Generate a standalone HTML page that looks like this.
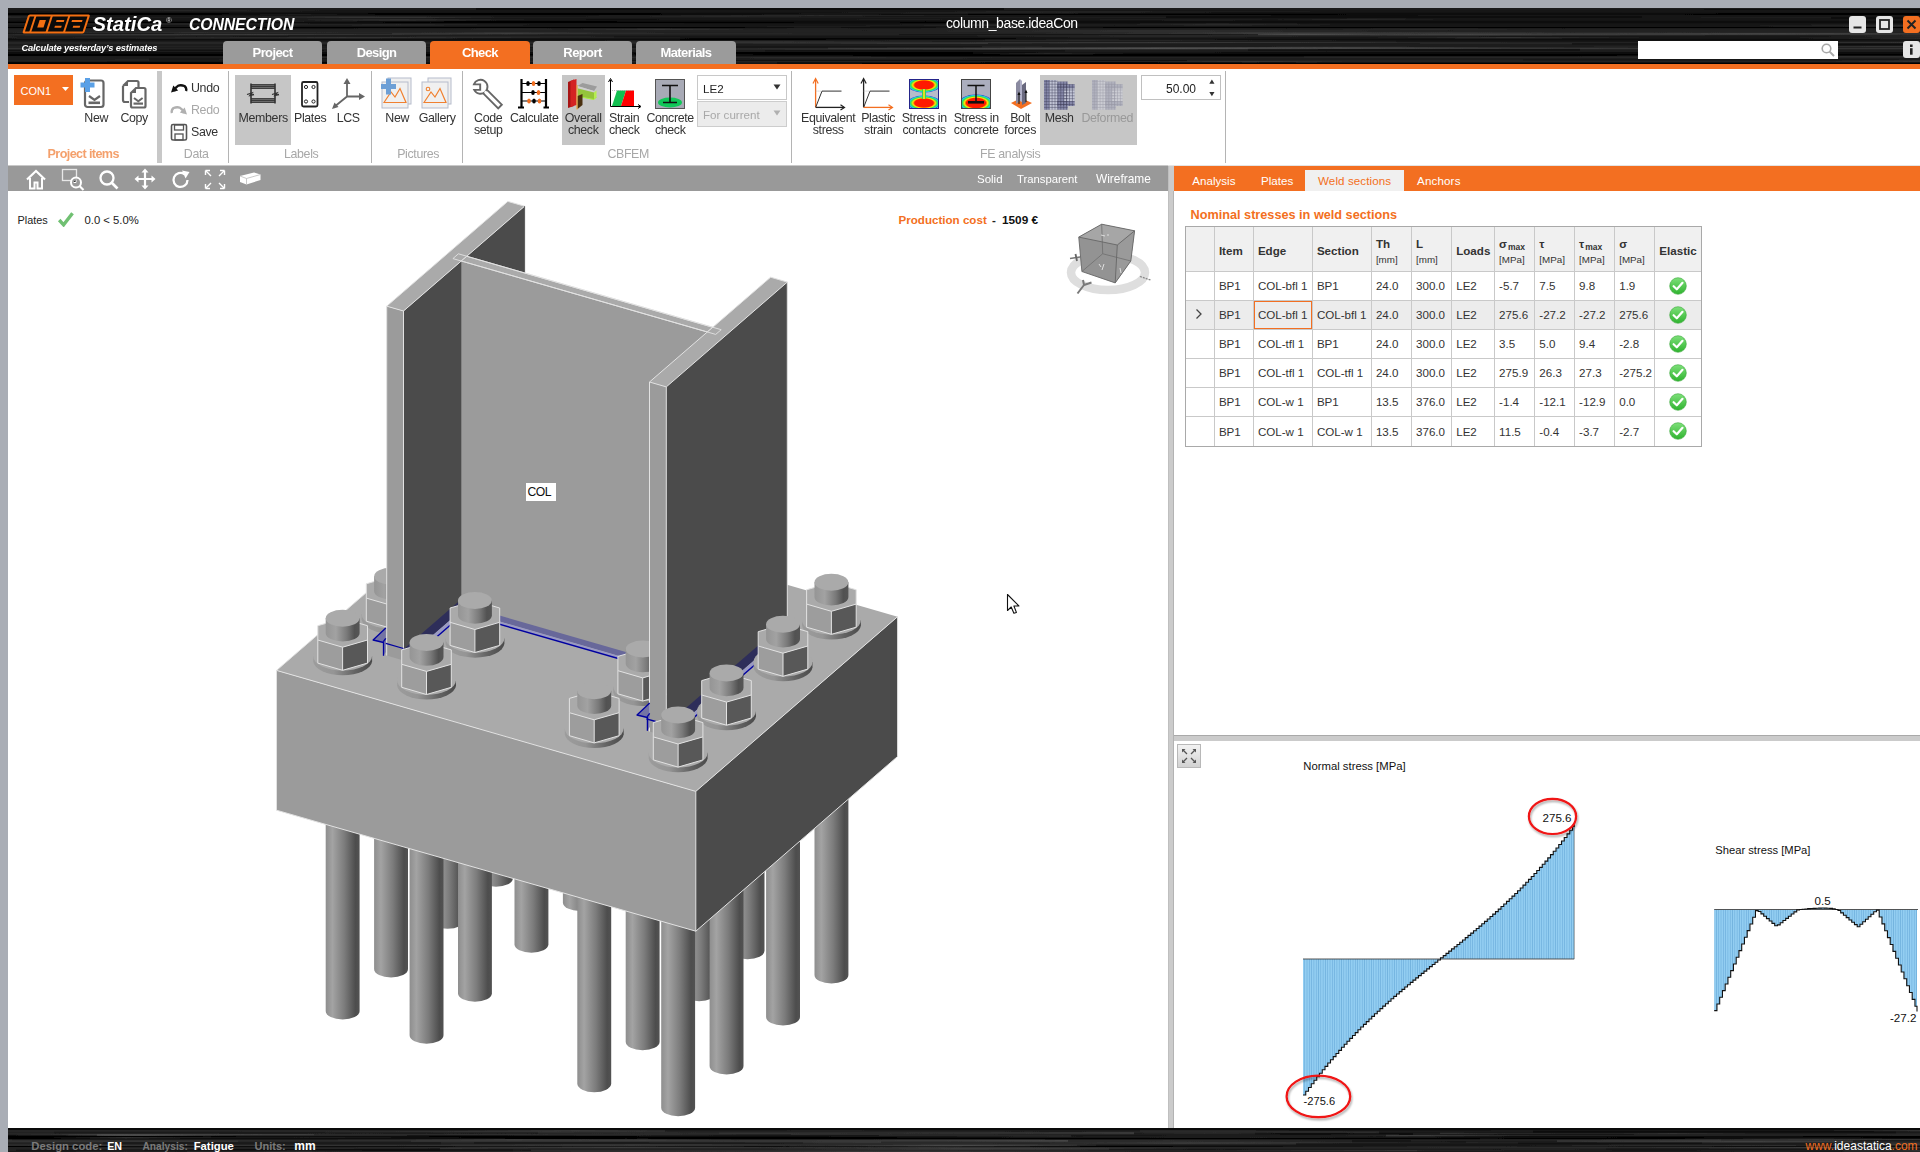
<!DOCTYPE html>
<html><head><meta charset="utf-8">
<style>
*{margin:0;padding:0;box-sizing:border-box}
html,body{width:1920px;height:1152px;overflow:hidden;background:#a9adb5;font-family:"Liberation Sans",sans-serif;color:#222}
.a{position:absolute}
.t{position:absolute;white-space:nowrap}
.brush{background-color:#131313;background-image:repeating-linear-gradient(180deg,rgba(255,255,255,0) 0px,rgba(255,255,255,0.06) 1.5px,rgba(0,0,0,0) 3px,rgba(0,0,0,0.35) 4.5px,rgba(255,255,255,0.03) 6px,rgba(0,0,0,0) 7px)}
</style></head><body>

<svg class="a" style="left:8px;top:8px" width="1912" height="56"><defs><linearGradient id="bl7" x1="0" x2="1"><stop offset="0" stop-color="#fff" stop-opacity="0"/><stop offset="0.5" stop-color="#fff" stop-opacity="1"/><stop offset="1" stop-color="#fff" stop-opacity="0"/></linearGradient><filter id="bf7" x="0" y="-50%" width="100%" height="200%"><feGaussianBlur stdDeviation="0 0.55"/></filter></defs><rect width="1912" height="56" fill="#202020"/><g filter="url(#bf7)"><rect y="0.0" width="1912" height="2.0" fill="rgb(26,26,26)"/><rect y="2.0" width="1912" height="2.5" fill="rgb(25,25,25)"/><rect y="4.5" width="1912" height="2.5" fill="rgb(4,4,4)"/><rect y="7.0" width="1912" height="2.0" fill="rgb(25,25,25)"/><rect y="9.0" width="1912" height="1.0" fill="rgb(27,27,27)"/><rect y="10.0" width="1912" height="2.5" fill="rgb(24,24,24)"/><rect y="12.5" width="1912" height="3.0" fill="rgb(7,7,7)"/><rect y="15.5" width="1912" height="2.5" fill="rgb(24,24,24)"/><rect y="18.0" width="1912" height="1.0" fill="rgb(24,24,24)"/><rect y="19.0" width="1912" height="1.5" fill="rgb(6,6,6)"/><rect y="20.5" width="1912" height="1.0" fill="rgb(32,32,32)"/><rect y="21.5" width="1912" height="3.0" fill="rgb(32,32,32)"/><rect y="24.5" width="1912" height="2.5" fill="rgb(33,33,33)"/><rect y="27.0" width="1912" height="1.0" fill="rgb(29,29,29)"/><rect y="28.0" width="1912" height="2.5" fill="rgb(25,25,25)"/><rect y="30.5" width="1912" height="2.0" fill="rgb(7,7,7)"/><rect y="32.5" width="1912" height="1.5" fill="rgb(30,30,30)"/><rect y="34.0" width="1912" height="2.0" fill="rgb(38,38,38)"/><rect y="36.0" width="1912" height="1.0" fill="rgb(27,27,27)"/><rect y="37.0" width="1912" height="1.0" fill="rgb(27,27,27)"/><rect y="38.0" width="1912" height="2.0" fill="rgb(32,32,32)"/><rect y="40.0" width="1912" height="1.5" fill="rgb(50,50,50)"/><rect y="41.5" width="1912" height="1.0" fill="rgb(25,25,25)"/><rect y="42.5" width="1912" height="1.5" fill="rgb(26,26,26)"/><rect y="44.0" width="1912" height="2.0" fill="rgb(11,11,11)"/><rect y="46.0" width="1912" height="2.5" fill="rgb(5,5,5)"/><rect y="48.5" width="1912" height="1.5" fill="rgb(38,38,38)"/><rect y="50.0" width="1912" height="2.5" fill="rgb(29,29,29)"/><rect y="52.5" width="1912" height="2.0" fill="rgb(36,36,36)"/><rect y="54.5" width="1912" height="1.5" fill="rgb(5,5,5)"/><rect x="801" y="3.4" width="515" height="2.0" fill="url(#bl7)" opacity="0.07"/><rect x="1021" y="25.0" width="525" height="2.0" fill="url(#bl7)" opacity="0.08"/><rect x="1212" y="25.9" width="162" height="1.0" fill="url(#bl7)" opacity="0.10"/><rect x="843" y="16.1" width="270" height="2.0" fill="url(#bl7)" opacity="0.06"/><rect x="626" y="4.5" width="629" height="1.5" fill="url(#bl7)" opacity="0.08"/><rect x="387" y="24.1" width="225" height="2.0" fill="url(#bl7)" opacity="0.07"/><rect x="677" y="49.5" width="347" height="1.0" fill="url(#bl7)" opacity="0.06"/><rect x="172" y="13.1" width="278" height="1.5" fill="url(#bl7)" opacity="0.12"/><rect x="185" y="8.2" width="305" height="2.0" fill="url(#bl7)" opacity="0.08"/><rect x="996" y="38.7" width="674" height="2.0" fill="url(#bl7)" opacity="0.14"/><rect x="1183" y="25.6" width="557" height="2.0" fill="url(#bl7)" opacity="0.12"/><rect x="629" y="5.8" width="369" height="2.0" fill="url(#bl7)" opacity="0.08"/><rect x="203" y="24.7" width="692" height="1.0" fill="url(#bl7)" opacity="0.07"/><rect x="-89" y="8.5" width="150" height="1.0" fill="url(#bl7)" opacity="0.13"/><rect x="1096" y="11.6" width="189" height="1.5" fill="url(#bl7)" opacity="0.05"/><rect x="333" y="20.4" width="341" height="1.0" fill="url(#bl7)" opacity="0.05"/><rect x="831" y="26.9" width="688" height="1.5" fill="url(#bl7)" opacity="0.05"/><rect x="16" y="14.8" width="338" height="2.0" fill="url(#bl7)" opacity="0.06"/><rect x="-151" y="29.6" width="673" height="1.0" fill="url(#bl7)" opacity="0.11"/><rect x="1731" y="16.7" width="567" height="2.0" fill="url(#bl7)" opacity="0.13"/><rect x="1270" y="20.5" width="294" height="1.0" fill="url(#bl7)" opacity="0.08"/><rect x="271" y="28.2" width="448" height="2.0" fill="url(#bl7)" opacity="0.06"/><rect x="1514" y="47.7" width="692" height="1.0" fill="url(#bl7)" opacity="0.12"/><rect x="1363" y="29.0" width="275" height="1.5" fill="url(#bl7)" opacity="0.11"/><rect x="1890" y="26.4" width="585" height="1.0" fill="url(#bl7)" opacity="0.11"/><rect x="1820" y="52.5" width="396" height="1.5" fill="url(#bl7)" opacity="0.14"/><rect x="570" y="12.7" width="271" height="1.0" fill="url(#bl7)" opacity="0.07"/><rect x="819" y="34.2" width="692" height="1.0" fill="url(#bl7)" opacity="0.09"/><rect x="1179" y="4.7" width="590" height="2.0" fill="url(#bl7)" opacity="0.05"/><rect x="621" y="11.2" width="541" height="1.0" fill="url(#bl7)" opacity="0.08"/><rect x="1143" y="53.0" width="198" height="2.0" fill="url(#bl7)" opacity="0.08"/><rect x="648" y="40.6" width="671" height="1.0" fill="url(#bl7)" opacity="0.14"/><rect x="-142" y="26.1" width="475" height="2.0" fill="url(#bl7)" opacity="0.05"/><rect x="1546" y="36.8" width="689" height="1.5" fill="url(#bl7)" opacity="0.06"/><rect x="958" y="44.8" width="162" height="2.0" fill="url(#bl7)" opacity="0.10"/><rect x="912" y="24.3" width="663" height="1.0" fill="url(#bl7)" opacity="0.12"/><rect x="246" y="16.4" width="289" height="1.0" fill="url(#bl7)" opacity="0.12"/><rect x="488" y="46.7" width="449" height="1.0" fill="url(#bl7)" opacity="0.13"/><rect x="547" y="32.7" width="402" height="2.0" fill="url(#bl7)" opacity="0.08"/><rect x="1738" y="29.8" width="426" height="2.0" fill="url(#bl7)" opacity="0.09"/><rect x="1643" y="34.1" width="577" height="1.0" fill="url(#bl7)" opacity="0.06"/><rect x="800" y="31.2" width="549" height="1.5" fill="url(#bl7)" opacity="0.11"/><rect x="921" y="43.5" width="415" height="2.0" fill="url(#bl7)" opacity="0.05"/><rect x="204" y="5.5" width="173" height="1.5" fill="url(#bl7)" opacity="0.10"/><rect x="1405" y="24.8" width="652" height="2.0" fill="url(#bl7)" opacity="0.14"/><rect x="1080" y="15.5" width="260" height="2.0" fill="url(#bl7)" opacity="0.09"/><rect x="810" y="39.2" width="668" height="1.5" fill="url(#bl7)" opacity="0.13"/><rect x="1685" y="25.1" width="261" height="1.5" fill="url(#bl7)" opacity="0.05"/><rect x="734" y="13.5" width="190" height="1.0" fill="url(#bl7)" opacity="0.06"/><rect x="439" y="43.5" width="217" height="2.0" fill="url(#bl7)" opacity="0.10"/><rect x="573" y="7.7" width="289" height="1.5" fill="url(#bl7)" opacity="0.06"/><rect x="1812" y="27.3" width="369" height="2.0" fill="url(#bl7)" opacity="0.12"/><rect x="141" y="28.9" width="387" height="1.5" fill="url(#bl7)" opacity="0.08"/><rect x="553" y="20.5" width="201" height="1.5" fill="url(#bl7)" opacity="0.10"/><rect x="730" y="18.6" width="160" height="2.0" fill="url(#bl7)" opacity="0.07"/><rect x="1829" y="51.4" width="212" height="1.0" fill="url(#bl7)" opacity="0.14"/><rect x="21" y="2.2" width="296" height="1.0" fill="url(#bl7)" opacity="0.07"/><rect x="74" y="51.0" width="382" height="1.5" fill="url(#bl7)" opacity="0.08"/><rect x="933" y="27.7" width="433" height="1.5" fill="url(#bl7)" opacity="0.05"/><rect x="-79" y="23.8" width="529" height="1.0" fill="url(#bl7)" opacity="0.07"/><rect x="-164" y="14.6" width="199" height="2.0" fill="url(#bl7)" opacity="0.13"/><rect x="-59" y="25.4" width="625" height="1.5" fill="url(#bl7)" opacity="0.14"/><rect x="682" y="34.8" width="653" height="1.0" fill="url(#bl7)" opacity="0.09"/><rect x="304" y="9.0" width="210" height="1.0" fill="url(#bl7)" opacity="0.06"/><rect x="1769" y="29.7" width="496" height="1.0" fill="url(#bl7)" opacity="0.07"/><rect x="856" y="19.4" width="248" height="1.0" fill="url(#bl7)" opacity="0.14"/><rect x="-122" y="28.3" width="160" height="1.0" fill="url(#bl7)" opacity="0.09"/><rect x="319" y="36.9" width="396" height="2.0" fill="url(#bl7)" opacity="0.08"/><rect x="845" y="22.0" width="609" height="2.0" fill="url(#bl7)" opacity="0.07"/><rect x="254" y="11.1" width="276" height="2.0" fill="url(#bl7)" opacity="0.11"/><rect x="95" y="55.0" width="694" height="1.0" fill="url(#bl7)" opacity="0.04"/><rect x="1121" y="24.1" width="634" height="1.0" fill="url(#bl7)" opacity="0.05"/><rect x="1577" y="37.6" width="629" height="1.5" fill="url(#bl7)" opacity="0.10"/><rect x="1263" y="10.4" width="175" height="1.5" fill="url(#bl7)" opacity="0.08"/><rect x="356" y="54.5" width="679" height="2.0" fill="url(#bl7)" opacity="0.07"/><rect x="-127" y="12.2" width="635" height="1.0" fill="url(#bl7)" opacity="0.04"/><rect x="606" y="28.2" width="364" height="1.0" fill="#000" opacity="0.27"/><rect x="1439" y="45.8" width="191" height="1.0" fill="#000" opacity="0.32"/><rect x="-112" y="17.0" width="160" height="1.0" fill="#000" opacity="0.23"/><rect x="1823" y="8.7" width="534" height="2.0" fill="#000" opacity="0.43"/><rect x="1322" y="15.9" width="372" height="1.0" fill="#000" opacity="0.21"/><rect x="1564" y="35.1" width="551" height="1.0" fill="#000" opacity="0.47"/><rect x="1390" y="45.5" width="406" height="1.0" fill="#000" opacity="0.45"/><rect x="1034" y="38.2" width="552" height="1.0" fill="#000" opacity="0.23"/><rect x="-112" y="53.7" width="437" height="2.0" fill="#000" opacity="0.45"/><rect x="980" y="35.1" width="432" height="1.0" fill="#000" opacity="0.35"/><rect x="-193" y="41.9" width="509" height="1.0" fill="#000" opacity="0.40"/><rect x="-61" y="14.1" width="482" height="1.0" fill="#000" opacity="0.45"/><rect x="296" y="12.9" width="490" height="2.0" fill="#000" opacity="0.35"/><rect x="608" y="38.3" width="366" height="1.0" fill="#000" opacity="0.39"/><rect x="1158" y="8.3" width="185" height="2.0" fill="#000" opacity="0.40"/><rect x="1263" y="7.5" width="430" height="2.0" fill="#000" opacity="0.22"/><rect x="368" y="38.8" width="452" height="2.0" fill="#000" opacity="0.29"/><rect x="891" y="26.1" width="359" height="1.0" fill="#000" opacity="0.50"/><rect x="960" y="4.8" width="290" height="2.0" fill="#000" opacity="0.21"/><rect x="769" y="54.2" width="519" height="2.0" fill="#000" opacity="0.50"/><rect x="617" y="52.1" width="562" height="1.0" fill="#000" opacity="0.37"/><rect x="99" y="53.4" width="386" height="1.0" fill="#000" opacity="0.38"/><rect x="1134" y="6.3" width="276" height="2.0" fill="#000" opacity="0.27"/><rect x="1696" y="1.4" width="369" height="1.0" fill="#000" opacity="0.48"/><rect x="1240" y="40.7" width="332" height="2.0" fill="#000" opacity="0.30"/><rect x="468" y="0.1" width="528" height="2.0" fill="#000" opacity="0.45"/><rect x="54" y="39.9" width="567" height="2.0" fill="#000" opacity="0.28"/><rect x="-63" y="48.7" width="326" height="1.0" fill="#000" opacity="0.31"/><rect x="704" y="2.7" width="274" height="1.0" fill="#000" opacity="0.22"/><rect x="1198" y="8.3" width="436" height="2.0" fill="#000" opacity="0.33"/><rect x="467" y="44.0" width="498" height="2.0" fill="#000" opacity="0.47"/><rect x="1515" y="51.2" width="434" height="1.0" fill="#000" opacity="0.42"/><rect x="-96" y="25.2" width="480" height="1.0" fill="#000" opacity="0.39"/><rect x="404" y="51.9" width="172" height="1.0" fill="#000" opacity="0.25"/><rect x="676" y="14.3" width="277" height="2.0" fill="#000" opacity="0.32"/><rect x="304" y="37.5" width="367" height="1.0" fill="#000" opacity="0.25"/><rect x="141" y="50.7" width="244" height="2.0" fill="#000" opacity="0.37"/><rect x="757" y="42.5" width="300" height="2.0" fill="#000" opacity="0.24"/><rect x="206" y="19.1" width="191" height="1.0" fill="#000" opacity="0.30"/><rect x="578" y="11.3" width="514" height="1.0" fill="#000" opacity="0.42"/><rect x="672" y="29.4" width="336" height="2.0" fill="#000" opacity="0.28"/><rect x="1388" y="32.2" width="374" height="2.0" fill="#000" opacity="0.24"/><rect x="863" y="48.3" width="433" height="1.0" fill="#000" opacity="0.23"/><rect x="1694" y="36.2" width="323" height="2.0" fill="#000" opacity="0.49"/><rect x="1592" y="1.2" width="543" height="1.0" fill="#000" opacity="0.33"/><rect x="1413" y="54.2" width="512" height="2.0" fill="#000" opacity="0.20"/><rect x="627" y="46.2" width="567" height="2.0" fill="#000" opacity="0.49"/></g></svg>
<div class="a" style="left:8.0px;top:64.0px;width:1912.0px;height:5.0px;background:#f36f21;"></div>
<svg class="a" style="left:0.0px;top:0.0px;" width="100" height="40" viewBox="0 0 100 40"><g transform="matrix(1,0,-0.325,1,10.855,0)">
<rect x="22.2" y="14.4" width="61.9" height="19" rx="1.6" fill="#f36f12"/>
<rect x="24.3" y="16.5" width="57.7" height="14.9" fill="#0a0a0a"/>
<g fill="#f36f12">
<rect x="28.8" y="16" width="2" height="16"/>
<rect x="45.1" y="16" width="2.1" height="16"/>
<rect x="62.6" y="16" width="2" height="16"/>
<rect x="35.3" y="20" width="6.3" height="7.5"/>
<rect x="52.3" y="20" width="7.7" height="1.9"/>
<rect x="52.5" y="25.8" width="6.8" height="1.9"/>
<rect x="67.7" y="20" width="10.5" height="1.9"/>
<rect x="70.8" y="25.8" width="7" height="1.9"/>
</g></g></svg>
<div class="t" style="left:92.5px;top:14.4px;font-size:20.30px;line-height:20.30px;color:#fff;font-weight:bold;font-style:italic;letter-spacing:0px">StatiCa</div>
<div class="t" style="left:166.0px;top:17.0px;font-size:8.00px;line-height:8.00px;color:#ddd;font-weight:normal;font-style:normal;">&reg;</div>
<div class="t" style="left:189.0px;top:16.9px;font-size:15.80px;line-height:15.80px;color:#fff;font-weight:bold;font-style:italic;letter-spacing:-0.1px">CONNECTION</div>
<div class="t" style="left:21.5px;top:44.0px;font-size:9.30px;line-height:9.30px;color:#fff;font-weight:bold;font-style:italic;letter-spacing:-0.15px">Calculate yesterday&#8217;s estimates</div>
<div class="t" style="left:946.0px;top:16.3px;font-size:14.00px;line-height:14.00px;color:#fff;font-weight:normal;font-style:normal;letter-spacing:-0.4px">column_base.ideaCon</div>
<div class="a" style="left:1849px;top:16px;width:17px;height:17px;background:#e6e6e6;border-radius:3px"></div>
<svg class="a" style="left:1849.0px;top:16.0px;" width="17" height="17" viewBox="0 0 17 17"><rect x="4.5" y="10.5" width="8" height="2" fill="#222"/></svg>
<div class="a" style="left:1876px;top:16px;width:17px;height:17px;background:#e6e6e6;border-radius:3px"></div>
<svg class="a" style="left:1876.0px;top:16.0px;" width="17" height="17" viewBox="0 0 17 17"><rect x="4" y="4" width="9" height="9" fill="none" stroke="#222" stroke-width="1.8"/></svg>
<div class="a" style="left:1903px;top:16px;width:17px;height:17px;background:#f36f21;border-radius:3px"></div>
<svg class="a" style="left:1903.0px;top:16.0px;" width="17" height="17" viewBox="0 0 17 17"><path d="M4.5,4.5 L12.5,12.5 M12.5,4.5 L4.5,12.5" stroke="#222" stroke-width="2"/></svg>
<div class="a" style="left:1638.0px;top:41.0px;width:200.0px;height:18.0px;background:#fff;"></div>
<svg class="a" style="left:1820.0px;top:42.0px;" width="16" height="16" viewBox="0 0 16 16"><circle cx="6.5" cy="6.5" r="4.3" fill="none" stroke="#a8a8a8" stroke-width="1.6"/><path d="M9.6,9.6 L14,14" stroke="#a8a8a8" stroke-width="2"/></svg>
<div class="a" style="left:1903px;top:41px;width:17px;height:17px;background:#e6e6e6;border-radius:3px"></div>
<svg class="a" style="left:1903.0px;top:41.0px;" width="17" height="17" viewBox="0 0 17 17"><rect x="7" y="3.5" width="2.6" height="2.5" fill="#222"/><rect x="7" y="7.2" width="2.6" height="6.5" fill="#222"/></svg>
<div class="a" style="left:223px;top:41px;width:99px;height:23px;background:#9b9b9b;border-radius:4px 4px 0 0"></div>
<div class="t" style="left:72.5px;width:400px;text-align:center;top:46.0px;font-size:13.00px;line-height:13.00px;color:#fff;font-weight:bold;font-style:normal;letter-spacing:-0.6px">Project</div>
<div class="a" style="left:327px;top:41px;width:99px;height:23px;background:#9b9b9b;border-radius:4px 4px 0 0"></div>
<div class="t" style="left:176.5px;width:400px;text-align:center;top:46.0px;font-size:13.00px;line-height:13.00px;color:#fff;font-weight:bold;font-style:normal;letter-spacing:-0.6px">Design</div>
<div class="a" style="left:430px;top:41px;width:100px;height:23px;background:#f36f21;border-radius:4px 4px 0 0"></div>
<div class="t" style="left:280.0px;width:400px;text-align:center;top:46.0px;font-size:13.00px;line-height:13.00px;color:#fff;font-weight:bold;font-style:normal;letter-spacing:-0.6px">Check</div>
<div class="a" style="left:533px;top:41px;width:99px;height:23px;background:#9b9b9b;border-radius:4px 4px 0 0"></div>
<div class="t" style="left:382.5px;width:400px;text-align:center;top:46.0px;font-size:13.00px;line-height:13.00px;color:#fff;font-weight:bold;font-style:normal;letter-spacing:-0.6px">Report</div>
<div class="a" style="left:636px;top:41px;width:100px;height:23px;background:#9b9b9b;border-radius:4px 4px 0 0"></div>
<div class="t" style="left:486.0px;width:400px;text-align:center;top:46.0px;font-size:13.00px;line-height:13.00px;color:#fff;font-weight:bold;font-style:normal;letter-spacing:-0.6px">Materials</div>
<div class="a" style="left:8.0px;top:69.0px;width:1912.0px;height:97.0px;background:#fff;"></div>
<div class="a" style="left:8.0px;top:165.0px;width:1912.0px;height:1.0px;background:#e4e4e4;"></div>
<div class="a" style="left:14.0px;top:75.0px;width:59.0px;height:30.0px;background:#f36f21;"></div>
<div class="t" style="left:20.6px;top:86.0px;font-size:11.00px;line-height:11.00px;color:#fff;font-weight:normal;font-style:normal;">CON1</div>
<svg class="a" style="left:61.0px;top:86.0px;" width="9" height="6" viewBox="0 0 9 6"><path d="M1,1 L8,1 L4.5,5 Z" fill="#fff"/></svg>
<svg class="a" style="left:80.0px;top:78.0px;" width="30" height="32" viewBox="0 0 30 32"><rect x="5" y="2.5" width="18.5" height="26.5" rx="2.5" fill="none" stroke="#666" stroke-width="2.2"/>
<path d="M9,18 L14.5,22 L20,18" fill="none" stroke="#666" stroke-width="2.2"/><rect x="8.5" y="23.5" width="11.5" height="2.6" fill="#666"/>
<rect x="0.5" y="4.5" width="14" height="5" fill="#5aa0e6"/><rect x="5" y="0" width="5" height="14" fill="#5aa0e6"/></svg>
<div class="t" style="left:-103.8px;width:400px;text-align:center;top:112.0px;font-size:12.40px;line-height:12.40px;color:#333;font-weight:normal;font-style:normal;letter-spacing:-0.35px">New</div>
<svg class="a" style="left:120.0px;top:78.0px;" width="28" height="32" viewBox="0 0 28 32"><path d="M3,8 L8,3 H17 Q18.5,3 18.5,4.5 V11" fill="none" stroke="#666" stroke-width="2.2"/><path d="M3,8 V22 Q3,24 5,24 H9" fill="none" stroke="#666" stroke-width="2.2"/>
<path d="M3,8 L8,3 V8 Z" fill="#666"/>
<path d="M11,15 L16,10 H24 Q25.5,10 25.5,11.5 V28 Q25.5,29.5 24,29.5 H12.5 Q11,29.5 11,28 Z" fill="none" stroke="#666" stroke-width="2.2"/>
<path d="M11,15 L16,10 V15 Z" fill="#666"/>
<path d="M14,20 L18.3,23.2 L22.6,20" fill="none" stroke="#666" stroke-width="2"/><rect x="13.5" y="24.5" width="9.5" height="2.2" fill="#666"/></svg>
<div class="t" style="left:-65.8px;width:400px;text-align:center;top:112.0px;font-size:12.40px;line-height:12.40px;color:#333;font-weight:normal;font-style:normal;letter-spacing:-0.35px">Copy</div>
<div class="t" style="left:-116.8px;width:400px;text-align:center;top:147.5px;font-size:12.60px;line-height:12.60px;color:#f4a06c;font-weight:bold;font-style:normal;letter-spacing:-0.6px">Project items</div>
<div class="a" style="left:157.0px;top:71.0px;width:5.0px;height:92.0px;background:#c8c8c8;"></div>
<svg class="a" style="left:170.0px;top:80.0px;" width="18" height="16" viewBox="0 0 18 16"><path d="M4,11 Q7,3 14.5,6 Q17,8 16,11" fill="none" stroke="#111" stroke-width="2.4"/><path d="M1,12.5 L3.3,5.5 L8.2,10.5 Z" fill="#111"/></svg>
<div class="t" style="left:191.0px;top:82.0px;font-size:12.40px;line-height:12.40px;color:#333;font-weight:normal;font-style:normal;letter-spacing:-0.35px">Undo</div>
<svg class="a" style="left:170.0px;top:102.0px;" width="18" height="16" viewBox="0 0 18 16"><path d="M14,11 Q11,3 3.5,6 Q1,8 2,11" fill="none" stroke="#b0b0b0" stroke-width="2.4"/><path d="M17,12.5 L14.7,5.5 L9.8,10.5 Z" fill="#b0b0b0"/></svg>
<div class="t" style="left:191.0px;top:104.0px;font-size:12.40px;line-height:12.40px;color:#a8a8a8;font-weight:normal;font-style:normal;letter-spacing:-0.35px">Redo</div>
<svg class="a" style="left:170.0px;top:123.0px;" width="18" height="18" viewBox="0 0 18 18"><rect x="1.5" y="1.5" width="15" height="15.5" rx="1.5" fill="none" stroke="#555" stroke-width="1.6"/><rect x="4.5" y="2" width="9" height="5" fill="none" stroke="#555" stroke-width="1.3"/><rect x="5" y="11" width="8" height="6" fill="none" stroke="#555" stroke-width="1.3"/></svg>
<div class="t" style="left:191.0px;top:125.5px;font-size:12.40px;line-height:12.40px;color:#333;font-weight:normal;font-style:normal;letter-spacing:-0.35px">Save</div>
<div class="t" style="left:-3.8px;width:400px;text-align:center;top:147.5px;font-size:12.40px;line-height:12.40px;color:#a8a8a8;font-weight:normal;font-style:normal;letter-spacing:-0.35px">Data</div>
<div class="a" style="left:228.0px;top:71.0px;width:1.0px;height:92.0px;background:#b4b4b4;"></div>
<div class="a" style="left:235.0px;top:75.0px;width:56.0px;height:70.0px;background:#c6c6c6;"></div>
<svg class="a" style="left:244.0px;top:82.0px;" width="38" height="24" viewBox="0 0 38 24"><rect x="7" y="2" width="24" height="5" fill="#3a3a3a"/><rect x="7" y="16" width="24" height="5" fill="#3a3a3a"/>
<path d="M7,3.3 H31 M7,5.6 H31 M7,17.3 H31 M7,19.6 H31" stroke="#888" stroke-width="0.7"/>
<path d="M7,1.5 V21.5 M31,1.5 V21.5" stroke="#333" stroke-width="1.6"/>
<path d="M3,12.5 L8,11 L6,13.5 L10,12.5 M28,12.5 L33,11 L31,13.5 L35,12.5" fill="none" stroke="#333" stroke-width="1.3"/></svg>
<div class="t" style="left:63.2px;width:400px;text-align:center;top:112.0px;font-size:12.40px;line-height:12.40px;color:#333;font-weight:normal;font-style:normal;letter-spacing:-0.35px">Members</div>
<svg class="a" style="left:300.0px;top:80.0px;" width="20" height="28" viewBox="0 0 20 28"><rect x="2" y="2" width="15.5" height="24.5" rx="1.5" fill="none" stroke="#222" stroke-width="1.8"/><circle cx="6" cy="7" r="1.6" fill="none" stroke="#222" stroke-width="1"/><circle cx="13.5" cy="7" r="1.6" fill="none" stroke="#222" stroke-width="1"/><circle cx="6" cy="21.5" r="1.6" fill="none" stroke="#222" stroke-width="1"/><circle cx="13.5" cy="21.5" r="1.6" fill="none" stroke="#222" stroke-width="1"/></svg>
<div class="t" style="left:110.2px;width:400px;text-align:center;top:112.0px;font-size:12.40px;line-height:12.40px;color:#333;font-weight:normal;font-style:normal;letter-spacing:-0.35px">Plates</div>
<svg class="a" style="left:330.0px;top:77.0px;" width="36" height="34" viewBox="0 0 36 34"><path d="M17,3 V19.5 L3.5,30.5 M17,19.5 H32" fill="none" stroke="#666" stroke-width="1.8"/><path d="M17,1 L13.5,7 H20.5 Z" fill="#666"/><path d="M35,19.5 L29,16 V23 Z" fill="#666"/><path d="M2,32 L4.5,25.5 L8.5,30 Z" fill="#666"/></svg>
<div class="t" style="left:148.2px;width:400px;text-align:center;top:112.0px;font-size:12.40px;line-height:12.40px;color:#333;font-weight:normal;font-style:normal;letter-spacing:-0.35px">LCS</div>
<div class="t" style="left:101.2px;width:400px;text-align:center;top:147.5px;font-size:12.40px;line-height:12.40px;color:#a8a8a8;font-weight:normal;font-style:normal;letter-spacing:-0.35px">Labels</div>
<div class="a" style="left:371.0px;top:71.0px;width:1.0px;height:92.0px;background:#b4b4b4;"></div>
<svg class="a" style="left:381.0px;top:77.0px;" width="32" height="33" viewBox="0 0 32 33"><rect x="7" y="1" width="23" height="26" fill="#f0f0f0" stroke="#b6bccc" stroke-width="1"/>
<rect x="1" y="5" width="26" height="26" fill="#f0f0f0" stroke="#b6bccc" stroke-width="1"/>
<path d="M3,25.5 L10,15 L14,20 L19,11.5 L25,25.5 Z" fill="none" stroke="#f08030" stroke-width="1.2"/><rect x="0" y="7" width="15" height="5" fill="#6d9fd6"/><rect x="5" y="1.5" width="5" height="16" fill="#6d9fd6"/></svg>
<div class="t" style="left:197.2px;width:400px;text-align:center;top:112.0px;font-size:12.40px;line-height:12.40px;color:#333;font-weight:normal;font-style:normal;letter-spacing:-0.35px">New</div>
<svg class="a" style="left:421.0px;top:77.0px;" width="32" height="33" viewBox="0 0 32 33"><rect x="7" y="1" width="23" height="26" fill="#f0f0f0" stroke="#b6bccc" stroke-width="1"/>
<rect x="1" y="5" width="26" height="26" fill="#f0f0f0" stroke="#b6bccc" stroke-width="1"/>
<path d="M3,25.5 L10,15 L14,20 L19,11.5 L25,25.5 Z" fill="none" stroke="#f08030" stroke-width="1.2"/><circle cx="7" cy="12" r="1.8" fill="none" stroke="#f08030" stroke-width="1.1"/></svg>
<div class="t" style="left:237.2px;width:400px;text-align:center;top:112.0px;font-size:12.40px;line-height:12.40px;color:#333;font-weight:normal;font-style:normal;letter-spacing:-0.35px">Gallery</div>
<div class="t" style="left:218.2px;width:400px;text-align:center;top:147.5px;font-size:12.40px;line-height:12.40px;color:#a8a8a8;font-weight:normal;font-style:normal;letter-spacing:-0.35px">Pictures</div>
<div class="a" style="left:462.0px;top:71.0px;width:1.0px;height:92.0px;background:#b4b4b4;"></div>
<svg class="a" style="left:472.0px;top:78.0px;" width="32" height="32" viewBox="0 0 32 32"><path d="M14.3,11.2 L29.8,26.7 L26.2,30.3 L10.7,14.8 Z" fill="#fff" stroke="#666" stroke-width="1.9"/><path d="M1.9,6.4 H8.2 V11.9 H2.2 A7,7 0 1 0 1.9,6.4 Z" fill="#fff" stroke="#666" stroke-width="1.9"/><path d="M12.8,13.4 L14.6,15.2" stroke="#fff" stroke-width="2.5"/></svg>
<div class="t" style="left:288.2px;width:400px;text-align:center;top:112.0px;font-size:12.40px;line-height:12.40px;color:#333;font-weight:normal;font-style:normal;letter-spacing:-0.35px">Code</div>
<div class="t" style="left:288.2px;width:400px;text-align:center;top:124.0px;font-size:12.40px;line-height:12.40px;color:#333;font-weight:normal;font-style:normal;letter-spacing:-0.35px">setup</div>
<svg class="a" style="left:518.0px;top:79.0px;" width="32" height="30" viewBox="0 0 32 30"><path d="M3.5,0 V28 M28,0 V28" stroke="#000" stroke-width="2.2"/><path d="M0,28.5 H6 M25.5,28.5 H31" stroke="#000" stroke-width="2.2"/>
<path d="M3.5,4.5 H28 M3.5,13.5 H28 M3.5,22 H28" stroke="#000" stroke-width="1.2"/>
<ellipse cx="10" cy="4.5" rx="1.8" ry="2.5" fill="#000"/><ellipse cx="15.5" cy="4.5" rx="1.8" ry="2.5" fill="#f36f21"/><ellipse cx="21" cy="4.5" rx="1.8" ry="2.5" fill="#000"/>
<ellipse cx="15" cy="13.5" rx="1.8" ry="2.5" fill="#000"/><ellipse cx="20.5" cy="13.5" rx="1.8" ry="2.5" fill="#f36f21"/>
<ellipse cx="11" cy="22" rx="1.8" ry="2.5" fill="#f36f21"/><ellipse cx="16" cy="22" rx="1.8" ry="2.5" fill="#000"/><ellipse cx="21.5" cy="22" rx="1.8" ry="2.5" fill="#f36f21"/></svg>
<div class="t" style="left:334.2px;width:400px;text-align:center;top:112.0px;font-size:12.40px;line-height:12.40px;color:#333;font-weight:normal;font-style:normal;letter-spacing:-0.35px">Calculate</div>
<div class="a" style="left:562.0px;top:75.0px;width:43.0px;height:70.0px;background:#c6c6c6;"></div>
<svg class="a" style="left:560.0px;top:72.0px;" width="40" height="40" viewBox="0 0 40 40"><path d="M8,10 L14,7.5 L14,34 L8,36 Z" fill="#a81414"/><path d="M10.5,9 L16.5,7 L16.5,33 L10.5,35 Z" fill="#d42222"/><path d="M8,10 L14,7.5 L16.5,7 L10.5,9 Z" fill="#e04848"/>
<path d="M17.5,14 L22.5,11 L37,14.5 L34,19 Z" fill="#9c9c9c"/><path d="M17.5,14 L34,19 L34,20.5 L17.5,16 Z" fill="#cfcfcf"/>
<path d="M18,16.5 L34,20.5 L34,27.5 L18,24.5 Z" fill="#94c43c"/><path d="M34,20.5 L36.5,18.5 L36.5,25 L34,27.5 Z" fill="#b6ee50"/><path d="M18,24.5 L34,27.5 L36.5,25" fill="none" stroke="#a8f040" stroke-width="1"/>
<path d="M17.5,24 L22.5,22 L22.5,33 L17.5,37 Z" fill="#4a3010"/><path d="M17,13 L17,37.5" stroke="#f0a020" stroke-width="1"/></svg>
<div class="t" style="left:383.2px;width:400px;text-align:center;top:112.0px;font-size:12.40px;line-height:12.40px;color:#333;font-weight:normal;font-style:normal;letter-spacing:-0.35px">Overall</div>
<div class="t" style="left:383.2px;width:400px;text-align:center;top:124.0px;font-size:12.40px;line-height:12.40px;color:#333;font-weight:normal;font-style:normal;letter-spacing:-0.35px">check</div>
<svg class="a" style="left:608.0px;top:78.0px;" width="34" height="32" viewBox="0 0 34 32"><path d="M2.5,2 V28.5 H32" fill="none" stroke="#000" stroke-width="1"/><path d="M0.5,4 L2.5,0.5 L4.5,4 M30,26.5 L33,28.5 L30,30.5" fill="none" stroke="#000" stroke-width="1"/><path d="M4,28 L9,12.5 H18 L13,28 Z" fill="#12c050"/><path d="M13,28 L18,12.5 H26 V28 Z" fill="#ff0000"/><path d="M4,12.5 H26" stroke="#999" stroke-width="0.6" stroke-dasharray="1,1"/></svg>
<div class="t" style="left:424.2px;width:400px;text-align:center;top:112.0px;font-size:12.40px;line-height:12.40px;color:#333;font-weight:normal;font-style:normal;letter-spacing:-0.35px">Strain</div>
<div class="t" style="left:424.2px;width:400px;text-align:center;top:124.0px;font-size:12.40px;line-height:12.40px;color:#333;font-weight:normal;font-style:normal;letter-spacing:-0.35px">check</div>
<svg class="a" style="left:655.0px;top:79.0px;" width="30" height="30" viewBox="0 0 30 30"><rect x="0.5" y="0.5" width="29" height="29" fill="#a8aab6" stroke="#555" stroke-width="1"/><ellipse cx="15" cy="23.5" rx="12" ry="5" fill="#10c858"/><path d="M7,6.5 H23 M15,6.5 V23 M8,23.5 H22" stroke="#111" stroke-width="1.6"/></svg>
<div class="t" style="left:470.2px;width:400px;text-align:center;top:112.0px;font-size:12.40px;line-height:12.40px;color:#333;font-weight:normal;font-style:normal;letter-spacing:-0.35px">Concrete</div>
<div class="t" style="left:470.2px;width:400px;text-align:center;top:124.0px;font-size:12.40px;line-height:12.40px;color:#333;font-weight:normal;font-style:normal;letter-spacing:-0.35px">check</div>
<div class="a" style="left:697px;top:75px;width:90px;height:25px;background:#fff;border:1px solid #c8c8c8"></div>
<div class="t" style="left:703.0px;top:83.0px;font-size:11.60px;line-height:11.60px;color:#222;font-weight:normal;font-style:normal;">LE2</div>
<svg class="a" style="left:773.0px;top:84.0px;" width="8" height="6" viewBox="0 0 8 6"><path d="M0.5,0.5 H7.5 L4,5.5 Z" fill="#333"/></svg>
<div class="a" style="left:697px;top:101px;width:90px;height:26px;background:#ececec;border:1px solid #cdcdcd"></div>
<div class="t" style="left:703.0px;top:109.0px;font-size:11.60px;line-height:11.60px;color:#a8a8a8;font-weight:normal;font-style:normal;">For current</div>
<svg class="a" style="left:773.0px;top:110.0px;" width="8" height="6" viewBox="0 0 8 6"><path d="M0.5,0.5 H7.5 L4,5.5 Z" fill="#b0b0b0"/></svg>
<div class="t" style="left:428.2px;width:400px;text-align:center;top:147.5px;font-size:12.40px;line-height:12.40px;color:#a8a8a8;font-weight:normal;font-style:normal;letter-spacing:-0.35px">CBFEM</div>
<div class="a" style="left:791.0px;top:71.0px;width:1.0px;height:92.0px;background:#b4b4b4;"></div>
<svg class="a" style="left:811.0px;top:77.0px;" width="36" height="34" viewBox="0 0 36 34"><path d="M4.6,3 V30.4" stroke="#f36f21" stroke-width="1.3"/><path d="M4.6,30.4 H33" stroke="#222" stroke-width="1.3"/><path d="M2,6.5 L4.6,1.5 L7.2,6.5" fill="none" stroke="#f36f21" stroke-width="1.2"/><path d="M29.5,27.8 L33.5,30.4 L29.5,33" fill="none" stroke="#222" stroke-width="1.2"/><path d="M4.8,30 L11,14.1 H30.5" fill="none" stroke="#333" stroke-width="1"/><path d="M4.6,14.1 H11" stroke="#aaa" stroke-width="0.7" stroke-dasharray="1,1"/></svg>
<div class="t" style="left:628.2px;width:400px;text-align:center;top:112.0px;font-size:12.40px;line-height:12.40px;color:#333;font-weight:normal;font-style:normal;letter-spacing:-0.35px">Equivalent</div>
<div class="t" style="left:628.2px;width:400px;text-align:center;top:124.0px;font-size:12.40px;line-height:12.40px;color:#333;font-weight:normal;font-style:normal;letter-spacing:-0.35px">stress</div>
<svg class="a" style="left:859.0px;top:77.0px;" width="36" height="34" viewBox="0 0 36 34"><path d="M4.6,3 V30.4" stroke="#222" stroke-width="1.3"/><path d="M4.6,30.4 H33" stroke="#f36f21" stroke-width="1.3"/><path d="M2,6.5 L4.6,1.5 L7.2,6.5" fill="none" stroke="#222" stroke-width="1.2"/><path d="M29.5,27.8 L33.5,30.4 L29.5,33" fill="none" stroke="#f36f21" stroke-width="1.2"/><path d="M4.8,30 L11,14.1 H30.5" fill="none" stroke="#333" stroke-width="1"/><path d="M4.6,14.1 H11" stroke="#aaa" stroke-width="0.7" stroke-dasharray="1,1"/></svg>
<div class="t" style="left:678.2px;width:400px;text-align:center;top:112.0px;font-size:12.40px;line-height:12.40px;color:#333;font-weight:normal;font-style:normal;letter-spacing:-0.35px">Plastic</div>
<div class="t" style="left:678.2px;width:400px;text-align:center;top:124.0px;font-size:12.40px;line-height:12.40px;color:#333;font-weight:normal;font-style:normal;letter-spacing:-0.35px">strain</div>
<svg class="a" style="left:909.0px;top:79.0px;" width="30" height="30" viewBox="0 0 30 30"><defs><radialGradient id="hot" cx="0.5" cy="0.5" r="0.5"><stop offset="0.56" stop-color="#ff1a00"/><stop offset="0.68" stop-color="#ffe400"/><stop offset="0.8" stop-color="#2ee05a"/><stop offset="0.91" stop-color="#20d0e0"/><stop offset="1" stop-color="#2030d0"/></radialGradient><clipPath id="cb"><rect x="0" y="0" width="30" height="30"/></clipPath></defs>
<rect x="0" y="0" width="30" height="30" fill="#b8bcca"/>
<g clip-path="url(#cb)"><ellipse cx="15" cy="6" rx="16.5" ry="7.5" fill="url(#hot)"/><ellipse cx="15" cy="24" rx="16.5" ry="7.5" fill="url(#hot)"/>
<rect x="13" y="10" width="4" height="10" fill="#30d060"/><rect x="14" y="10" width="2" height="10" fill="#e0e020"/></g>
<rect x="0.5" y="0.5" width="29" height="29" fill="none" stroke="#24248a" stroke-width="1"/></svg>
<div class="t" style="left:724.2px;width:400px;text-align:center;top:112.0px;font-size:12.40px;line-height:12.40px;color:#333;font-weight:normal;font-style:normal;letter-spacing:-0.35px">Stress in</div>
<div class="t" style="left:724.2px;width:400px;text-align:center;top:124.0px;font-size:12.40px;line-height:12.40px;color:#333;font-weight:normal;font-style:normal;letter-spacing:-0.35px">contacts</div>
<svg class="a" style="left:961.0px;top:79.0px;" width="30" height="30" viewBox="0 0 30 30"><defs><clipPath id="cb2"><rect x="0" y="0" width="30" height="30"/></clipPath></defs>
<rect x="0" y="0" width="30" height="30" fill="#abaebe"/>
<g clip-path="url(#cb2)"><ellipse cx="15" cy="24" rx="17" ry="8.5" fill="url(#hot)"/></g>
<rect x="0.5" y="0.5" width="29" height="29" fill="none" stroke="#444" stroke-width="1"/>
<path d="M6.5,6.5 H23.5 M15,6.5 V23" stroke="#111" stroke-width="1.5"/><path d="M7,23.3 H23" stroke="#111" stroke-width="2.6"/></svg>
<div class="t" style="left:776.2px;width:400px;text-align:center;top:112.0px;font-size:12.40px;line-height:12.40px;color:#333;font-weight:normal;font-style:normal;letter-spacing:-0.35px">Stress in</div>
<div class="t" style="left:776.2px;width:400px;text-align:center;top:124.0px;font-size:12.40px;line-height:12.40px;color:#333;font-weight:normal;font-style:normal;letter-spacing:-0.35px">concrete</div>
<svg class="a" style="left:1008.0px;top:77.0px;" width="26" height="33" viewBox="0 0 26 33"><path d="M3,26 L13,21 L24,26 L13,32 Z" fill="#f36f21"/><path d="M8,6 L12,2 V24 L8,27 Z" fill="#8a8aa0"/><path d="M12,2 L14,4 V25 L12,24 Z" fill="#b0b0c8"/><path d="M14,8 L18,5 V26 L14,28 Z" fill="#6a6a80"/>
<path d="M11,27 V16 M18,25 V14" stroke="#111" stroke-width="1"/><path d="M9.5,18 L11,14.5 L12.5,18 M16.5,16 L18,12.5 L19.5,16" fill="#111"/></svg>
<div class="t" style="left:820.2px;width:400px;text-align:center;top:112.0px;font-size:12.40px;line-height:12.40px;color:#333;font-weight:normal;font-style:normal;letter-spacing:-0.35px">Bolt</div>
<div class="t" style="left:820.2px;width:400px;text-align:center;top:124.0px;font-size:12.40px;line-height:12.40px;color:#333;font-weight:normal;font-style:normal;letter-spacing:-0.35px">forces</div>
<div class="a" style="left:1040.0px;top:75.0px;width:97.0px;height:70.0px;background:#c6c6c6;"></div>
<svg class="a" style="left:1040.0px;top:75.0px;" width="40" height="38" viewBox="0 0 40 38"><defs><pattern id="grd1040" width="2.9" height="2.9" patternUnits="userSpaceOnUse"><path d="M0,0.3 H2.9 M0.3,0 V2.9" stroke="#3c3c58" stroke-width="0.55"/></pattern></defs><g opacity="1"><rect x="4" y="5" width="5.7" height="29.7" fill="#8789aa"/><rect x="9.7" y="5" width="7.6" height="29.7" fill="#c2c5d6"/><rect x="17.3" y="6.6" width="10.4" height="28.1" fill="#8789aa"/><rect x="17.3" y="9.2" width="17.3" height="4.5" fill="#8789aa"/><rect x="24" y="13.7" width="10.6" height="12.3" fill="#c2c5d6"/><rect x="17.3" y="26" width="17.3" height="5" fill="#8789aa"/><rect x="4" y="5" width="5.7" height="29.7" fill="url(#grd1040)"/><rect x="9.7" y="5" width="7.6" height="29.7" fill="url(#grd1040)"/><rect x="17.3" y="6.6" width="10.4" height="28.1" fill="url(#grd1040)"/><rect x="17.3" y="9.2" width="17.3" height="4.5" fill="url(#grd1040)"/><rect x="24" y="13.7" width="10.6" height="12.3" fill="url(#grd1040)"/><rect x="17.3" y="26" width="17.3" height="5" fill="url(#grd1040)"/></g></svg>
<div class="t" style="left:859.2px;width:400px;text-align:center;top:112.0px;font-size:12.40px;line-height:12.40px;color:#333;font-weight:normal;font-style:normal;letter-spacing:-0.35px">Mesh</div>
<svg class="a" style="left:1088.0px;top:75.0px;" width="40" height="38" viewBox="0 0 40 38"><defs><pattern id="grd1088" width="2.9" height="2.9" patternUnits="userSpaceOnUse"><path d="M0,0.3 H2.9 M0.3,0 V2.9" stroke="#707088" stroke-width="0.55"/></pattern></defs><g opacity="0.55"><rect x="4" y="5" width="5.7" height="29.7" fill="#a0a2b8"/><rect x="9.7" y="5" width="7.6" height="29.7" fill="#d0d2de"/><rect x="17.3" y="6.6" width="10.4" height="28.1" fill="#a0a2b8"/><rect x="17.3" y="9.2" width="17.3" height="4.5" fill="#a0a2b8"/><rect x="24" y="13.7" width="10.6" height="12.3" fill="#d0d2de"/><rect x="17.3" y="26" width="17.3" height="5" fill="#a0a2b8"/><rect x="4" y="5" width="5.7" height="29.7" fill="url(#grd1088)"/><rect x="9.7" y="5" width="7.6" height="29.7" fill="url(#grd1088)"/><rect x="17.3" y="6.6" width="10.4" height="28.1" fill="url(#grd1088)"/><rect x="17.3" y="9.2" width="17.3" height="4.5" fill="url(#grd1088)"/><rect x="24" y="13.7" width="10.6" height="12.3" fill="url(#grd1088)"/><rect x="17.3" y="26" width="17.3" height="5" fill="url(#grd1088)"/></g></svg>
<div class="t" style="left:907.2px;width:400px;text-align:center;top:112.0px;font-size:12.40px;line-height:12.40px;color:#999;font-weight:normal;font-style:normal;letter-spacing:-0.35px">Deformed</div>
<div class="a" style="left:1141px;top:75px;width:80px;height:25px;background:#fff;border:1px solid #c0c0c0"></div>
<div class="t" style="left:796.0px;width:400px;text-align:right;top:83.0px;font-size:12.00px;line-height:12.00px;color:#222;font-weight:normal;font-style:normal;">50.00</div>
<svg class="a" style="left:1207.0px;top:78.0px;" width="10" height="19" viewBox="0 0 10 19"><path d="M2.3,5.8 L4.9,1.6 L7.5,5.8 Z M2.3,14 L4.9,18.2 L7.5,14 Z" fill="#333"/></svg>
<div class="t" style="left:810.2px;width:400px;text-align:center;top:147.5px;font-size:12.40px;line-height:12.40px;color:#a8a8a8;font-weight:normal;font-style:normal;letter-spacing:-0.35px">FE analysis</div>
<div class="a" style="left:1225.0px;top:71.0px;width:1.0px;height:92.0px;background:#b4b4b4;"></div>
<div class="a" style="left:8.0px;top:166.0px;width:1160.0px;height:25.0px;background:#999999;"></div>
<div class="a" style="left:8.0px;top:165.0px;width:1160.0px;height:1.0px;background:#c8c8c8;"></div>
<svg class="a" style="left:25.0px;top:169.0px;" width="22" height="21" viewBox="0 0 22 21"><path d="M2,10.5 L11,2 L20,10.5" fill="none" stroke="#fff" stroke-width="2.2"/><path d="M5,9 V19.5 H9.5 V13.5 H12.5 V19.5 H17 V9" fill="none" stroke="#fff" stroke-width="2"/></svg>
<svg class="a" style="left:61.0px;top:168.0px;" width="24" height="23" viewBox="0 0 24 23"><rect x="1.5" y="1.5" width="14" height="11" fill="none" stroke="#e8e8e8" stroke-width="1.3"/><circle cx="15" cy="14.5" r="5" fill="#999" stroke="#fff" stroke-width="2"/><path d="M18.5,18 L22.5,22" stroke="#fff" stroke-width="2.2"/><path d="M15,11.5 V14.5 H12.5" stroke="#fff" stroke-width="1"/></svg>
<svg class="a" style="left:98.0px;top:169.0px;" width="22" height="22" viewBox="0 0 22 22"><circle cx="9" cy="9" r="6.5" fill="none" stroke="#fff" stroke-width="2.3"/><path d="M13.5,13.5 L19.5,19.5" stroke="#fff" stroke-width="2.6"/></svg>
<svg class="a" style="left:134.0px;top:168.0px;" width="22" height="22" viewBox="0 0 22 22"><path d="M11,2 V20 M2,11 H20" stroke="#fff" stroke-width="2.2"/><path d="M11,0.5 L7.5,4.5 H14.5 Z M11,21.5 L7.5,17.5 H14.5 Z M0.5,11 L4.5,7.5 V14.5 Z M21.5,11 L17.5,7.5 V14.5 Z" fill="#fff"/></svg>
<svg class="a" style="left:171.0px;top:169.0px;" width="20" height="21" viewBox="0 0 20 21"><path d="M16.5,11 A7,7 0 1 1 13.5,5.2" fill="none" stroke="#fff" stroke-width="2.3"/><path d="M11,1.5 L18.5,3 L14.5,9.5 Z" fill="#fff"/></svg>
<svg class="a" style="left:204.0px;top:169.0px;" width="22" height="21" viewBox="0 0 22 21"><path d="M2,2 L7,7 M20,2 L15,7 M2,19 L7,14 M20,19 L15,14" stroke="#fff" stroke-width="1.4"/><path d="M1.5,1.5 H6 M1.5,1.5 V6 M20.5,1.5 H16 M20.5,1.5 V6 M1.5,19.5 H6 M1.5,19.5 V15 M20.5,19.5 H16 M20.5,19.5 V15" stroke="#fff" stroke-width="1.4"/></svg>
<svg class="a" style="left:238.0px;top:171.0px;" width="24" height="16" viewBox="0 0 24 16"><path d="M2,5 L16,1.5 L22.5,3.5 V9 L8.5,13.5 L2,11 Z" fill="#fff"/><path d="M2,5 L8.5,7.5 L22.5,3.5 M8.5,7.5 V13.5" fill="none" stroke="#bbb" stroke-width="0.8"/></svg>
<div class="t" style="left:977.0px;top:174.3px;font-size:11.50px;line-height:11.50px;color:#fff;font-weight:normal;font-style:normal;">Solid</div>
<div class="t" style="left:1017.0px;top:174.3px;font-size:11.30px;line-height:11.30px;color:#fff;font-weight:normal;font-style:normal;">Transparent</div>
<div class="t" style="left:1096.0px;top:174.3px;font-size:11.90px;line-height:11.90px;color:#fff;font-weight:normal;font-style:normal;">Wireframe</div>
<div class="a" style="left:8.0px;top:191.0px;width:1160.0px;height:937.0px;background:#fff;"></div>
<div class="t" style="left:17.5px;top:214.5px;font-size:10.90px;line-height:10.90px;color:#222;font-weight:normal;font-style:normal;">Plates</div>
<svg class="a" style="left:57.0px;top:211.0px;" width="18" height="16" viewBox="0 0 18 16"><path d="M2.2,9 L6.6,13.8 L15.5,2.2" fill="none" stroke="#70c072" stroke-width="3.4"/></svg>
<div class="t" style="left:84.5px;top:214.5px;font-size:11.30px;line-height:11.30px;color:#222;font-weight:normal;font-style:normal;">0.0 &lt; 5.0%</div>
<div class="t" style="left:898.5px;top:213.5px;font-size:11.60px;line-height:11.60px;color:#f36f21;font-weight:bold;font-style:normal;">Production cost</div>
<div class="t" style="left:992.0px;top:213.5px;font-size:11.60px;line-height:11.60px;color:#222;font-weight:bold;font-style:normal;">-</div>
<div class="t" style="left:1002.0px;top:214.5px;font-size:11.80px;line-height:11.80px;color:#111;font-weight:bold;font-style:normal;">1509 &euro;</div>
<svg class="a" style="left:8px;top:191px" width="1160" height="937" viewBox="8 191 1160 937" shape-rendering="geometricPrecision"><defs>
<linearGradient id="ga" x1="0" x2="1" y1="0" y2="0"><stop offset="0" stop-color="#8e8e8e"/><stop offset="0.2" stop-color="#a3a3a3"/><stop offset="0.55" stop-color="#7c7c7c"/><stop offset="0.88" stop-color="#4d4d4d"/><stop offset="1" stop-color="#525252"/></linearGradient>
<linearGradient id="gs" x1="0" x2="1" y1="0" y2="0"><stop offset="0" stop-color="#959595"/><stop offset="0.3" stop-color="#a2a2a2"/><stop offset="0.62" stop-color="#7a7a7a"/><stop offset="0.85" stop-color="#525252"/><stop offset="1" stop-color="#555"/></linearGradient>
<linearGradient id="gw" x1="0" x2="1" y1="0" y2="0"><stop offset="0" stop-color="#9c9c9c"/><stop offset="0.35" stop-color="#959595"/><stop offset="0.7" stop-color="#646464"/><stop offset="1" stop-color="#4a4a4a"/></linearGradient>
</defs><path d="M479,668.5 L479,878.2 A16.9,8.5 0 0 0 512.9,878.2 L512.9,668.5 Z" fill="url(#ga)"/>
<path d="M562.9,692.7 L562.9,902.4 A16.9,8.5 0 0 0 596.8,902.4 L596.8,692.7 Z" fill="url(#ga)"/>
<path d="M430.6,710.5 L430.6,920.1 A16.9,8.5 0 0 0 464.5,920.1 L464.5,710.5 Z" fill="url(#ga)"/>
<path d="M514.5,734.7 L514.5,944.3 A16.9,8.5 0 0 0 548.4,944.3 L548.4,734.7 Z" fill="url(#ga)"/>
<path d="M730.6,741.2 L730.6,950.8 A16.9,8.5 0 0 0 764.5,950.8 L764.5,741.2 Z" fill="url(#ga)"/>
<path d="M374.1,759.4 L374.1,969 A16.9,8.5 0 0 0 408,969 L408,759.4 Z" fill="url(#ga)"/>
<path d="M814.5,765.4 L814.5,975 A16.9,8.5 0 0 0 848.4,975 L848.4,765.4 Z" fill="url(#ga)"/>
<path d="M682.2,783.1 L682.2,992.8 A16.9,8.5 0 0 0 716.1,992.8 L716.1,783.1 Z" fill="url(#ga)"/>
<path d="M458,783.6 L458,993.3 A16.9,8.5 0 0 0 491.9,993.3 L491.9,783.6 Z" fill="url(#ga)"/>
<path d="M325.7,801.3 L325.7,1011 A16.9,8.5 0 0 0 359.6,1011 L359.6,801.3 Z" fill="url(#ga)"/>
<path d="M766.1,807.3 L766.1,1017 A16.9,8.5 0 0 0 800,1017 L800,807.3 Z" fill="url(#ga)"/>
<path d="M409.6,825.5 L409.6,1035.2 A16.9,8.5 0 0 0 443.5,1035.2 L443.5,825.5 Z" fill="url(#ga)"/>
<path d="M625.7,832 L625.7,1041.7 A16.9,8.5 0 0 0 659.6,1041.7 L659.6,832 Z" fill="url(#ga)"/>
<path d="M709.6,856.2 L709.6,1065.9 A16.9,8.5 0 0 0 743.5,1065.9 L743.5,856.2 Z" fill="url(#ga)"/>
<path d="M577.3,873.9 L577.3,1083.6 A16.9,8.5 0 0 0 611.2,1083.6 L611.2,873.9 Z" fill="url(#ga)"/>
<path d="M661.2,898.2 L661.2,1107.8 A16.9,8.5 0 0 0 695.1,1107.8 L695.1,898.2 Z" fill="url(#ga)"/>
<polygon points="276.5,670.4 695.8,791.4 695.8,931.2 276.5,810.2" fill="#9b9b9b"/>
<polygon points="695.8,791.4 897.6,616.7 897.6,756.5 695.8,931.2" fill="#4b4b4b"/>
<polygon points="276.5,670.4 695.8,791.4 897.6,616.7 478.2,495.7" fill="#aaaaaa"/>
<polyline points="478.2,495.7 276.5,670.4 695.8,791.4 897.6,616.7 897.6,756.5 695.8,931.2 276.5,810.2" fill="none" stroke="#e2e2e2" stroke-width="1" stroke-linejoin="round"/>
<polyline points="695.8,791.4 695.8,931.2" fill="none" stroke="#e2e2e2" stroke-width="1" stroke-linejoin="round"/>
<polyline points="276.5,670.4 276.5,810.2" fill="none" stroke="#e2e2e2" stroke-width="1" stroke-linejoin="round"/>
<path d="M466.5,523.2 L466.5,528.8 A29.5,14.7 0 0 0 525.4,528.8 L525.4,523.2 Z" fill="url(#gw)"/>
<ellipse cx="496" cy="523.2" rx="29.5" ry="14.7" fill="#aaaaaa"/>
<polygon points="471.2,530.3 496,537.5 496,514.4 471.2,507.3" fill="#9d9d9d"/>
<polygon points="496,537.5 520.8,530.3 520.8,507.3 496,514.4" fill="#585858"/>
<polygon points="520.8,507.3 520.8,492.9 496,485.8 471.2,492.9 471.2,507.3 496,514.4" fill="#aaaaaa"/>
<polyline points="520.8,507.3 520.8,492.9 496,485.8 471.2,492.9 471.2,507.3 496,514.4 520.8,507.3" fill="none" stroke="#e2e2e2" stroke-width="1" stroke-linejoin="round"/>
<polyline points="471.2,507.3 471.2,530.3 496,537.5 520.8,530.3 520.8,507.3" fill="none" stroke="#e2e2e2" stroke-width="1" stroke-linejoin="round"/>
<polyline points="496,537.5 496,514.4" fill="none" stroke="#e2e2e2" stroke-width="1" stroke-linejoin="round"/>
<path d="M479,485.4 L479,500.1 A16.9,8.5 0 0 0 512.9,500.1 L512.9,485.4 Z" fill="url(#gs)"/>
<ellipse cx="496" cy="485.4" rx="16.9" ry="8.5" fill="#aaaaaa"/>
<path d="M418.1,565.1 L418.1,570.7 A29.5,14.7 0 0 0 477,570.7 L477,565.1 Z" fill="url(#gw)"/>
<ellipse cx="447.6" cy="565.1" rx="29.5" ry="14.7" fill="#aaaaaa"/>
<polygon points="422.7,572.3 447.6,579.4 447.6,556.4 422.7,549.2" fill="#9d9d9d"/>
<polygon points="447.6,579.4 472.4,572.3 472.4,549.2 447.6,556.4" fill="#585858"/>
<polygon points="472.4,549.2 472.4,534.9 447.6,527.7 422.7,534.9 422.7,549.2 447.6,556.4" fill="#aaaaaa"/>
<polyline points="472.4,549.2 472.4,534.9 447.6,527.7 422.7,534.9 422.7,549.2 447.6,556.4 472.4,549.2" fill="none" stroke="#e2e2e2" stroke-width="1" stroke-linejoin="round"/>
<polyline points="422.7,549.2 422.7,572.3 447.6,579.4 472.4,572.3 472.4,549.2" fill="none" stroke="#e2e2e2" stroke-width="1" stroke-linejoin="round"/>
<polyline points="447.6,579.4 447.6,556.4" fill="none" stroke="#e2e2e2" stroke-width="1" stroke-linejoin="round"/>
<path d="M430.6,527.4 L430.6,542 A16.9,8.5 0 0 0 464.5,542 L464.5,527.4 Z" fill="url(#gs)"/>
<ellipse cx="447.6" cy="527.4" rx="16.9" ry="8.5" fill="#aaaaaa"/>
<path d="M361.6,614 L361.6,619.6 A29.5,14.7 0 0 0 420.5,619.6 L420.5,614 Z" fill="url(#gw)"/>
<ellipse cx="391.1" cy="614" rx="29.5" ry="14.7" fill="#aaaaaa"/>
<polygon points="366.3,621.2 391.1,628.3 391.1,605.3 366.3,598.1" fill="#9d9d9d"/>
<polygon points="391.1,628.3 415.9,621.2 415.9,598.1 391.1,605.3" fill="#585858"/>
<polygon points="415.9,598.1 415.9,583.8 391.1,576.6 366.3,583.8 366.3,598.1 391.1,605.3" fill="#aaaaaa"/>
<polyline points="415.9,598.1 415.9,583.8 391.1,576.6 366.3,583.8 366.3,598.1 391.1,605.3 415.9,598.1" fill="none" stroke="#e2e2e2" stroke-width="1" stroke-linejoin="round"/>
<polyline points="366.3,598.1 366.3,621.2 391.1,628.3 415.9,621.2 415.9,598.1" fill="none" stroke="#e2e2e2" stroke-width="1" stroke-linejoin="round"/>
<polyline points="391.1,628.3 391.1,605.3" fill="none" stroke="#e2e2e2" stroke-width="1" stroke-linejoin="round"/>
<path d="M374.1,576.3 L374.1,591 A16.9,8.5 0 0 0 408,591 L408,576.3 Z" fill="url(#gs)"/>
<ellipse cx="391.1" cy="576.3" rx="16.9" ry="8.5" fill="#aaaaaa"/>
<polygon points="403.5,660.5 524.6,555.6 524.6,206.2 403.5,311" fill="#4b4b4b"/>
<polygon points="386.7,655.6 403.5,660.5 403.5,311 386.7,306.2" fill="#9b9b9b"/>
<polygon points="386.7,306.2 403.5,311 524.6,206.2 507.8,201.4" fill="#aaaaaa"/>
<polyline points="386.7,655.6 386.7,306.2 403.5,311 403.5,660.5" fill="none" stroke="#e2e2e2" stroke-width="1" stroke-linejoin="round"/>
<polyline points="386.7,306.2 507.8,201.4 524.6,206.2 403.5,311" fill="none" stroke="#e2e2e2" stroke-width="1" stroke-linejoin="round"/>
<polyline points="524.6,206.2 524.6,555.6" fill="none" stroke="#5a5a5a" stroke-width="1" stroke-linejoin="round"/>
<path d="M550.4,547.4 L550.4,553 A29.5,14.7 0 0 0 609.3,553 L609.3,547.4 Z" fill="url(#gw)"/>
<ellipse cx="579.8" cy="547.4" rx="29.5" ry="14.7" fill="#aaaaaa"/>
<polygon points="555,554.5 579.8,561.7 579.8,538.6 555,531.5" fill="#9d9d9d"/>
<polygon points="579.8,561.7 604.6,554.5 604.6,531.5 579.8,538.6" fill="#585858"/>
<polygon points="604.6,531.5 604.6,517.1 579.8,510 555,517.1 555,531.5 579.8,538.6" fill="#aaaaaa"/>
<polyline points="604.6,531.5 604.6,517.1 579.8,510 555,517.1 555,531.5 579.8,538.6 604.6,531.5" fill="none" stroke="#e2e2e2" stroke-width="1" stroke-linejoin="round"/>
<polyline points="555,531.5 555,554.5 579.8,561.7 604.6,554.5 604.6,531.5" fill="none" stroke="#e2e2e2" stroke-width="1" stroke-linejoin="round"/>
<polyline points="579.8,561.7 579.8,538.6" fill="none" stroke="#e2e2e2" stroke-width="1" stroke-linejoin="round"/>
<path d="M562.9,509.6 L562.9,524.3 A16.9,8.5 0 0 0 596.8,524.3 L596.8,509.6 Z" fill="url(#gs)"/>
<ellipse cx="579.8" cy="509.6" rx="16.9" ry="8.5" fill="#aaaaaa"/>
<path d="M502,589.3 L502,594.9 A29.5,14.7 0 0 0 560.9,594.9 L560.9,589.3 Z" fill="url(#gw)"/>
<ellipse cx="531.4" cy="589.3" rx="29.5" ry="14.7" fill="#aaaaaa"/>
<polygon points="506.6,596.5 531.4,603.6 531.4,580.6 506.6,573.4" fill="#9d9d9d"/>
<polygon points="531.4,603.6 556.2,596.5 556.2,573.4 531.4,580.6" fill="#585858"/>
<polygon points="556.2,573.4 556.2,559.1 531.4,551.9 506.6,559.1 506.6,573.4 531.4,580.6" fill="#aaaaaa"/>
<polyline points="556.2,573.4 556.2,559.1 531.4,551.9 506.6,559.1 506.6,573.4 531.4,580.6 556.2,573.4" fill="none" stroke="#e2e2e2" stroke-width="1" stroke-linejoin="round"/>
<polyline points="506.6,573.4 506.6,596.5 531.4,603.6 556.2,596.5 556.2,573.4" fill="none" stroke="#e2e2e2" stroke-width="1" stroke-linejoin="round"/>
<polyline points="531.4,603.6 531.4,580.6" fill="none" stroke="#e2e2e2" stroke-width="1" stroke-linejoin="round"/>
<path d="M514.5,551.6 L514.5,566.2 A16.9,8.5 0 0 0 548.4,566.2 L548.4,551.6 Z" fill="url(#gs)"/>
<ellipse cx="531.4" cy="551.6" rx="16.9" ry="8.5" fill="#aaaaaa"/>
<path d="M718.1,595.8 L718.1,601.4 A29.5,14.7 0 0 0 777,601.4 L777,595.8 Z" fill="url(#gw)"/>
<ellipse cx="747.6" cy="595.8" rx="29.5" ry="14.7" fill="#aaaaaa"/>
<polygon points="722.8,603 747.6,610.1 747.6,587.1 722.8,579.9" fill="#9d9d9d"/>
<polygon points="747.6,610.1 772.4,603 772.4,579.9 747.6,587.1" fill="#585858"/>
<polygon points="772.4,579.9 772.4,565.6 747.6,558.4 722.8,565.6 722.8,579.9 747.6,587.1" fill="#aaaaaa"/>
<polyline points="772.4,579.9 772.4,565.6 747.6,558.4 722.8,565.6 722.8,579.9 747.6,587.1 772.4,579.9" fill="none" stroke="#e2e2e2" stroke-width="1" stroke-linejoin="round"/>
<polyline points="722.8,579.9 722.8,603 747.6,610.1 772.4,603 772.4,579.9" fill="none" stroke="#e2e2e2" stroke-width="1" stroke-linejoin="round"/>
<polyline points="747.6,610.1 747.6,587.1" fill="none" stroke="#e2e2e2" stroke-width="1" stroke-linejoin="round"/>
<path d="M730.6,558.1 L730.6,572.7 A16.9,8.5 0 0 0 764.5,572.7 L764.5,558.1 Z" fill="url(#gs)"/>
<ellipse cx="747.6" cy="558.1" rx="16.9" ry="8.5" fill="#aaaaaa"/>
<path d="M669.7,637.7 L669.7,643.3 A29.5,14.7 0 0 0 728.6,643.3 L728.6,637.7 Z" fill="url(#gw)"/>
<ellipse cx="699.2" cy="637.7" rx="29.5" ry="14.7" fill="#aaaaaa"/>
<polygon points="674.3,644.9 699.2,652 699.2,629 674.3,621.8" fill="#9d9d9d"/>
<polygon points="699.2,652 724,644.9 724,621.8 699.2,629" fill="#585858"/>
<polygon points="724,621.8 724,607.5 699.2,600.3 674.3,607.5 674.3,621.8 699.2,629" fill="#aaaaaa"/>
<polyline points="724,621.8 724,607.5 699.2,600.3 674.3,607.5 674.3,621.8 699.2,629 724,621.8" fill="none" stroke="#e2e2e2" stroke-width="1" stroke-linejoin="round"/>
<polyline points="674.3,621.8 674.3,644.9 699.2,652 724,644.9 724,621.8" fill="none" stroke="#e2e2e2" stroke-width="1" stroke-linejoin="round"/>
<polyline points="699.2,652 699.2,629" fill="none" stroke="#e2e2e2" stroke-width="1" stroke-linejoin="round"/>
<path d="M682.2,600 L682.2,614.7 A16.9,8.5 0 0 0 716.1,614.7 L716.1,600 Z" fill="url(#gs)"/>
<ellipse cx="699.2" cy="600" rx="16.9" ry="8.5" fill="#aaaaaa"/>
<polygon points="403.5,649.3 461.3,599.2 461.3,610.4 403.5,660.5" fill="#2e2e5a"/>
<polygon points="403.5,660.5 458.9,612.5 463.4,613.8 408.1,661.8" fill="#9a9ac2"/>
<polyline points="408.1,661.8 463.4,613.8" fill="none" stroke="#0000a0" stroke-width="1.4" stroke-linejoin="round"/>
<polygon points="461.3,610.4 707.3,681.4 707.3,332 461.3,261" fill="#9b9b9b"/>
<polygon points="461.3,261 707.3,332 712.8,327.3 466.8,256.3" fill="#aaaaaa"/>
<polyline points="466.8,256.3 461.3,261 707.3,332 712.8,327.3 466.8,256.3" fill="none" stroke="#e2e2e2" stroke-width="1" stroke-linejoin="round"/>
<polygon points="461.3,604.4 707.3,675.4 707.3,681.4 461.3,610.4" fill="#68689a"/>
<polygon points="465.9,611.7 707.3,681.4 704.9,683.5 463.4,613.8" fill="#9a9ac2"/>
<polyline points="463.4,613.8 704.9,683.5" fill="none" stroke="#0000a0" stroke-width="1.4" stroke-linejoin="round"/>
<path d="M445.5,638.2 L445.5,643.8 A29.5,14.7 0 0 0 504.4,643.8 L504.4,638.2 Z" fill="url(#gw)"/>
<ellipse cx="474.9" cy="638.2" rx="29.5" ry="14.7" fill="#aaaaaa"/>
<polygon points="450.1,645.4 474.9,652.5 474.9,629.5 450.1,622.3" fill="#9d9d9d"/>
<polygon points="474.9,652.5 499.7,645.4 499.7,622.3 474.9,629.5" fill="#585858"/>
<polygon points="499.7,622.3 499.7,608 474.9,600.8 450.1,608 450.1,622.3 474.9,629.5" fill="#aaaaaa"/>
<polyline points="499.7,622.3 499.7,608 474.9,600.8 450.1,608 450.1,622.3 474.9,629.5 499.7,622.3" fill="none" stroke="#e2e2e2" stroke-width="1" stroke-linejoin="round"/>
<polyline points="450.1,622.3 450.1,645.4 474.9,652.5 499.7,645.4 499.7,622.3" fill="none" stroke="#e2e2e2" stroke-width="1" stroke-linejoin="round"/>
<polyline points="474.9,652.5 474.9,629.5" fill="none" stroke="#e2e2e2" stroke-width="1" stroke-linejoin="round"/>
<path d="M458,600.5 L458,615.2 A16.9,8.5 0 0 0 491.9,615.2 L491.9,600.5 Z" fill="url(#gs)"/>
<ellipse cx="474.9" cy="600.5" rx="16.9" ry="8.5" fill="#aaaaaa"/>
<path d="M613.2,686.6 L613.2,692.2 A29.5,14.7 0 0 0 672.1,692.2 L672.1,686.6 Z" fill="url(#gw)"/>
<ellipse cx="642.7" cy="686.6" rx="29.5" ry="14.7" fill="#aaaaaa"/>
<polygon points="617.9,693.8 642.7,701 642.7,677.9 617.9,670.7" fill="#9d9d9d"/>
<polygon points="642.7,701 667.5,693.8 667.5,670.7 642.7,677.9" fill="#585858"/>
<polygon points="667.5,670.7 667.5,656.4 642.7,649.3 617.9,656.4 617.9,670.7 642.7,677.9" fill="#aaaaaa"/>
<polyline points="667.5,670.7 667.5,656.4 642.7,649.3 617.9,656.4 617.9,670.7 642.7,677.9 667.5,670.7" fill="none" stroke="#e2e2e2" stroke-width="1" stroke-linejoin="round"/>
<polyline points="617.9,670.7 617.9,693.8 642.7,701 667.5,693.8 667.5,670.7" fill="none" stroke="#e2e2e2" stroke-width="1" stroke-linejoin="round"/>
<polyline points="642.7,701 642.7,677.9" fill="none" stroke="#e2e2e2" stroke-width="1" stroke-linejoin="round"/>
<path d="M625.7,648.9 L625.7,663.6 A16.9,8.5 0 0 0 659.6,663.6 L659.6,648.9 Z" fill="url(#gs)"/>
<ellipse cx="642.7" cy="648.9" rx="16.9" ry="8.5" fill="#aaaaaa"/>
<polygon points="649.5,731.5 666.3,736.3 666.3,386.9 649.5,382" fill="#9b9b9b"/>
<polygon points="649.5,382 666.3,386.9 787.3,282.1 770.6,277.2" fill="#aaaaaa"/>
<polygon points="666.3,736.3 787.3,631.5 787.3,282.1 666.3,386.9" fill="#4b4b4b"/>
<polygon points="666.3,725.1 787.3,620.3 787.3,631.5 666.3,736.3" fill="#2e2e5a"/>
<polygon points="666.3,736.3 787.3,631.5 791.9,632.8 670.8,737.6" fill="#9a9ac2"/>
<polyline points="670.8,737.6 791.9,632.8" fill="none" stroke="#0000a0" stroke-width="1.4" stroke-linejoin="round"/>
<polyline points="649.5,731.5 649.5,382 666.3,386.9 666.3,736.3" fill="none" stroke="#e2e2e2" stroke-width="1" stroke-linejoin="round"/>
<polyline points="649.5,382 770.6,277.2 787.3,282.1 666.3,386.9" fill="none" stroke="#e2e2e2" stroke-width="1" stroke-linejoin="round"/>
<polyline points="787.3,282.1 787.3,631.5" fill="none" stroke="#e2e2e2" stroke-width="1" stroke-linejoin="round"/>
<polyline points="458.4,253.8 452.9,258.6 715.7,334.4 721.2,329.7 458.4,253.8" fill="none" stroke="#e2e2e2" stroke-width="0.9" stroke-linejoin="round"/>
<polygon points="385.8,628 373.1,640 383.5,642.5 385.8,643" fill="#7474a4"/>
<polygon points="383.5,641.3 385.8,638.4 385.8,652 383.5,655.8" fill="#7474a4"/>
<polyline points="385.8,628 373.1,640 383.5,642.5" fill="none" stroke="#0000a0" stroke-width="1.3" stroke-linejoin="round"/>
<polyline points="383.5,641.3 385.8,638.4" fill="none" stroke="#0000a0" stroke-width="1.3" stroke-linejoin="round"/>
<polyline points="383.5,641.3 383.5,655.8" fill="none" stroke="#0000a0" stroke-width="1.3" stroke-linejoin="round"/>
<polygon points="649.7,703 637,715 647.4,717.5 649.7,718" fill="#7474a4"/>
<polygon points="647.4,716.3 649.7,713.4 649.7,727 647.4,730.8" fill="#7474a4"/>
<polyline points="649.7,703 637,715 647.4,717.5" fill="none" stroke="#0000a0" stroke-width="1.3" stroke-linejoin="round"/>
<polyline points="647.4,716.3 649.7,713.4" fill="none" stroke="#0000a0" stroke-width="1.3" stroke-linejoin="round"/>
<polyline points="647.4,716.3 647.4,730.8" fill="none" stroke="#0000a0" stroke-width="1.3" stroke-linejoin="round"/>
<polyline points="385.8,643.3 403.5,648.5" fill="none" stroke="#0000a0" stroke-width="1.3" stroke-linejoin="round"/>
<polyline points="646.4,718.9 655.7,721.5" fill="none" stroke="#0000a0" stroke-width="1.3" stroke-linejoin="round"/>
<path d="M802,620 L802,625.6 A29.5,14.7 0 0 0 860.9,625.6 L860.9,620 Z" fill="url(#gw)"/>
<ellipse cx="831.4" cy="620" rx="29.5" ry="14.7" fill="#aaaaaa"/>
<polygon points="806.6,627.2 831.4,634.3 831.4,611.3 806.6,604.1" fill="#9d9d9d"/>
<polygon points="831.4,634.3 856.2,627.2 856.2,604.1 831.4,611.3" fill="#585858"/>
<polygon points="856.2,604.1 856.2,589.8 831.4,582.6 806.6,589.8 806.6,604.1 831.4,611.3" fill="#aaaaaa"/>
<polyline points="856.2,604.1 856.2,589.8 831.4,582.6 806.6,589.8 806.6,604.1 831.4,611.3 856.2,604.1" fill="none" stroke="#e2e2e2" stroke-width="1" stroke-linejoin="round"/>
<polyline points="806.6,604.1 806.6,627.2 831.4,634.3 856.2,627.2 856.2,604.1" fill="none" stroke="#e2e2e2" stroke-width="1" stroke-linejoin="round"/>
<polyline points="831.4,634.3 831.4,611.3" fill="none" stroke="#e2e2e2" stroke-width="1" stroke-linejoin="round"/>
<path d="M814.5,582.3 L814.5,596.9 A16.9,8.5 0 0 0 848.4,596.9 L848.4,582.3 Z" fill="url(#gs)"/>
<ellipse cx="831.4" cy="582.3" rx="16.9" ry="8.5" fill="#aaaaaa"/>
<path d="M313.2,655.9 L313.2,661.5 A29.5,14.7 0 0 0 372.1,661.5 L372.1,655.9 Z" fill="url(#gw)"/>
<ellipse cx="342.6" cy="655.9" rx="29.5" ry="14.7" fill="#aaaaaa"/>
<polygon points="317.8,663.1 342.6,670.3 342.6,647.2 317.8,640" fill="#9d9d9d"/>
<polygon points="342.6,670.3 367.5,663.1 367.5,640 342.6,647.2" fill="#585858"/>
<polygon points="367.5,640 367.5,625.7 342.6,618.6 317.8,625.7 317.8,640 342.6,647.2" fill="#aaaaaa"/>
<polyline points="367.5,640 367.5,625.7 342.6,618.6 317.8,625.7 317.8,640 342.6,647.2 367.5,640" fill="none" stroke="#e2e2e2" stroke-width="1" stroke-linejoin="round"/>
<polyline points="317.8,640 317.8,663.1 342.6,670.3 367.5,663.1 367.5,640" fill="none" stroke="#e2e2e2" stroke-width="1" stroke-linejoin="round"/>
<polyline points="342.6,670.3 342.6,647.2" fill="none" stroke="#e2e2e2" stroke-width="1" stroke-linejoin="round"/>
<path d="M325.7,618.2 L325.7,632.9 A16.9,8.5 0 0 0 359.6,632.9 L359.6,618.2 Z" fill="url(#gs)"/>
<ellipse cx="342.6" cy="618.2" rx="16.9" ry="8.5" fill="#aaaaaa"/>
<path d="M753.6,661.9 L753.6,667.5 A29.5,14.7 0 0 0 812.5,667.5 L812.5,661.9 Z" fill="url(#gw)"/>
<ellipse cx="783" cy="661.9" rx="29.5" ry="14.7" fill="#aaaaaa"/>
<polygon points="758.2,669.1 783,676.3 783,653.2 758.2,646" fill="#9d9d9d"/>
<polygon points="783,676.3 807.8,669.1 807.8,646 783,653.2" fill="#585858"/>
<polygon points="807.8,646 807.8,631.7 783,624.5 758.2,631.7 758.2,646 783,653.2" fill="#aaaaaa"/>
<polyline points="807.8,646 807.8,631.7 783,624.5 758.2,631.7 758.2,646 783,653.2 807.8,646" fill="none" stroke="#e2e2e2" stroke-width="1" stroke-linejoin="round"/>
<polyline points="758.2,646 758.2,669.1 783,676.3 807.8,669.1 807.8,646" fill="none" stroke="#e2e2e2" stroke-width="1" stroke-linejoin="round"/>
<polyline points="783,676.3 783,653.2" fill="none" stroke="#e2e2e2" stroke-width="1" stroke-linejoin="round"/>
<path d="M766.1,624.2 L766.1,638.9 A16.9,8.5 0 0 0 800,638.9 L800,624.2 Z" fill="url(#gs)"/>
<ellipse cx="783" cy="624.2" rx="16.9" ry="8.5" fill="#aaaaaa"/>
<path d="M397.1,680.2 L397.1,685.7 A29.5,14.7 0 0 0 456,685.7 L456,680.2 Z" fill="url(#gw)"/>
<ellipse cx="426.5" cy="680.2" rx="29.5" ry="14.7" fill="#aaaaaa"/>
<polygon points="401.7,687.3 426.5,694.5 426.5,671.4 401.7,664.3" fill="#9d9d9d"/>
<polygon points="426.5,694.5 451.3,687.3 451.3,664.3 426.5,671.4" fill="#585858"/>
<polygon points="451.3,664.3 451.3,649.9 426.5,642.8 401.7,649.9 401.7,664.3 426.5,671.4" fill="#aaaaaa"/>
<polyline points="451.3,664.3 451.3,649.9 426.5,642.8 401.7,649.9 401.7,664.3 426.5,671.4 451.3,664.3" fill="none" stroke="#e2e2e2" stroke-width="1" stroke-linejoin="round"/>
<polyline points="401.7,664.3 401.7,687.3 426.5,694.5 451.3,687.3 451.3,664.3" fill="none" stroke="#e2e2e2" stroke-width="1" stroke-linejoin="round"/>
<polyline points="426.5,694.5 426.5,671.4" fill="none" stroke="#e2e2e2" stroke-width="1" stroke-linejoin="round"/>
<path d="M409.6,642.4 L409.6,657.1 A16.9,8.5 0 0 0 443.5,657.1 L443.5,642.4 Z" fill="url(#gs)"/>
<ellipse cx="426.5" cy="642.4" rx="16.9" ry="8.5" fill="#aaaaaa"/>
<path d="M697.1,710.9 L697.1,716.4 A29.5,14.7 0 0 0 756,716.4 L756,710.9 Z" fill="url(#gw)"/>
<ellipse cx="726.5" cy="710.9" rx="29.5" ry="14.7" fill="#aaaaaa"/>
<polygon points="701.7,718 726.5,725.2 726.5,702.1 701.7,695" fill="#9d9d9d"/>
<polygon points="726.5,725.2 751.3,718 751.3,695 726.5,702.1" fill="#585858"/>
<polygon points="751.3,695 751.3,680.6 726.5,673.5 701.7,680.6 701.7,695 726.5,702.1" fill="#aaaaaa"/>
<polyline points="751.3,695 751.3,680.6 726.5,673.5 701.7,680.6 701.7,695 726.5,702.1 751.3,695" fill="none" stroke="#e2e2e2" stroke-width="1" stroke-linejoin="round"/>
<polyline points="701.7,695 701.7,718 726.5,725.2 751.3,718 751.3,695" fill="none" stroke="#e2e2e2" stroke-width="1" stroke-linejoin="round"/>
<polyline points="726.5,725.2 726.5,702.1" fill="none" stroke="#e2e2e2" stroke-width="1" stroke-linejoin="round"/>
<path d="M709.6,673.1 L709.6,687.8 A16.9,8.5 0 0 0 743.5,687.8 L743.5,673.1 Z" fill="url(#gs)"/>
<ellipse cx="726.5" cy="673.1" rx="16.9" ry="8.5" fill="#aaaaaa"/>
<path d="M564.8,728.6 L564.8,734.2 A29.5,14.7 0 0 0 623.7,734.2 L623.7,728.6 Z" fill="url(#gw)"/>
<ellipse cx="594.2" cy="728.6" rx="29.5" ry="14.7" fill="#aaaaaa"/>
<polygon points="569.4,735.7 594.2,742.9 594.2,719.8 569.4,712.7" fill="#9d9d9d"/>
<polygon points="594.2,742.9 619.1,735.7 619.1,712.7 594.2,719.8" fill="#585858"/>
<polygon points="619.1,712.7 619.1,698.4 594.2,691.2 569.4,698.4 569.4,712.7 594.2,719.8" fill="#aaaaaa"/>
<polyline points="619.1,712.7 619.1,698.4 594.2,691.2 569.4,698.4 569.4,712.7 594.2,719.8 619.1,712.7" fill="none" stroke="#e2e2e2" stroke-width="1" stroke-linejoin="round"/>
<polyline points="569.4,712.7 569.4,735.7 594.2,742.9 619.1,735.7 619.1,712.7" fill="none" stroke="#e2e2e2" stroke-width="1" stroke-linejoin="round"/>
<polyline points="594.2,742.9 594.2,719.8" fill="none" stroke="#e2e2e2" stroke-width="1" stroke-linejoin="round"/>
<path d="M577.3,690.8 L577.3,705.5 A16.9,8.5 0 0 0 611.2,705.5 L611.2,690.8 Z" fill="url(#gs)"/>
<ellipse cx="594.2" cy="690.8" rx="16.9" ry="8.5" fill="#aaaaaa"/>
<path d="M648.7,752.8 L648.7,758.4 A29.5,14.7 0 0 0 707.6,758.4 L707.6,752.8 Z" fill="url(#gw)"/>
<ellipse cx="678.1" cy="752.8" rx="29.5" ry="14.7" fill="#aaaaaa"/>
<polygon points="653.3,759.9 678.1,767.1 678.1,744 653.3,736.9" fill="#9d9d9d"/>
<polygon points="678.1,767.1 702.9,759.9 702.9,736.9 678.1,744" fill="#585858"/>
<polygon points="702.9,736.9 702.9,722.6 678.1,715.4 653.3,722.6 653.3,736.9 678.1,744" fill="#aaaaaa"/>
<polyline points="702.9,736.9 702.9,722.6 678.1,715.4 653.3,722.6 653.3,736.9 678.1,744 702.9,736.9" fill="none" stroke="#e2e2e2" stroke-width="1" stroke-linejoin="round"/>
<polyline points="653.3,736.9 653.3,759.9 678.1,767.1 702.9,759.9 702.9,736.9" fill="none" stroke="#e2e2e2" stroke-width="1" stroke-linejoin="round"/>
<polyline points="678.1,767.1 678.1,744" fill="none" stroke="#e2e2e2" stroke-width="1" stroke-linejoin="round"/>
<path d="M661.2,715 L661.2,729.7 A16.9,8.5 0 0 0 695.1,729.7 L695.1,715 Z" fill="url(#gs)"/>
<ellipse cx="678.1" cy="715" rx="16.9" ry="8.5" fill="#aaaaaa"/></svg>
<div class="a" style="left:526px;top:483px;width:30px;height:18px;background:#fff"></div>
<div class="t" style="left:527.5px;top:486.0px;font-size:12.20px;line-height:12.20px;color:#111;font-weight:normal;font-style:normal;letter-spacing:-0.5px">COL</div>
<svg class="a" style="left:1060.0px;top:218.0px;" width="95" height="88" viewBox="0 0 95 88"><ellipse cx="48" cy="54.5" rx="37" ry="17.6" fill="none" stroke="#dedede" stroke-width="8.5"/>
<path d="M18.75,19.1 L41.7,6.2 L74.6,12.8 L70.8,43 L55.2,64.9 L21.9,53.5 Z" fill="#939393"/>
<path d="M18.75,19.1 L41.7,6.2 L74.6,12.8 L57.3,27 Z" fill="#a6a6a6"/>
<path d="M57.3,27 L74.6,12.8 L70.8,43 L55.2,64.9 Z" fill="#9a9a9a"/>
<path d="M41.7,6.2 L42.7,35.75 L21.9,53.5 M42.7,35.75 L70.8,43" fill="none" stroke="#6e6e6e" stroke-width="0.8"/>
<path d="M18.75,19.1 L41.7,6.2 L74.6,12.8 L70.8,43 L55.2,64.9 L21.9,53.5 Z M18.75,19.1 L57.3,27 L74.6,12.8 M57.3,27 L55.2,64.9" fill="none" stroke="#666" stroke-width="0.9"/>
<path d="M10,40.5 L20,39" stroke="#777" stroke-width="1.5"/><path d="M15.5,36 L17,43" stroke="#666" stroke-width="1.8"/>
<path d="M80,58.5 L90.5,62" stroke="#888" stroke-width="1.3" stroke-dasharray="2,1"/>
<path d="M17.5,75.5 L24,67 M24,67 L23,62 M24,67 L31.5,64.5" fill="none" stroke="#7a7a7a" stroke-width="2"/>
<path d="M39,46 L41,49 M44,46 L42,52 M60,50 L61,55" stroke="#e8e8e8" stroke-width="0.9"/>
<path d="M41,17 L45,18 M47,17 L49,17" stroke="#eee" stroke-width="0.8"/></svg>
<svg class="a" style="left:1006.0px;top:593.0px;" width="14" height="22" viewBox="0 0 14 22"><path d="M1.5,1.5 V17.5 L5.2,14 L7.9,20.3 L10.4,19.4 L7.9,13 H12.9 Z" fill="#fff" stroke="#111" stroke-width="1.1" stroke-linejoin="round"/></svg>
<div class="a" style="left:1168.0px;top:166.0px;width:6.0px;height:962.0px;background:#cbcbcb;"></div>
<div class="a" style="left:1168.0px;top:166.0px;width:1.0px;height:962.0px;background:#bfbfbf;"></div>
<div class="a" style="left:1173.0px;top:191.0px;width:1.0px;height:937.0px;background:#b3b3b3;"></div>
<svg class="a" style="left:8px;top:1128px" width="1912" height="24"><defs><linearGradient id="bl11" x1="0" x2="1"><stop offset="0" stop-color="#fff" stop-opacity="0"/><stop offset="0.5" stop-color="#fff" stop-opacity="1"/><stop offset="1" stop-color="#fff" stop-opacity="0"/></linearGradient><filter id="bf11" x="0" y="-50%" width="100%" height="200%"><feGaussianBlur stdDeviation="0 0.55"/></filter></defs><rect width="1912" height="24" fill="#202020"/><g filter="url(#bf11)"><rect y="0.0" width="1912" height="2.0" fill="rgb(32,32,32)"/><rect y="2.0" width="1912" height="2.5" fill="rgb(37,37,37)"/><rect y="4.5" width="1912" height="2.5" fill="rgb(36,36,36)"/><rect y="7.0" width="1912" height="1.0" fill="rgb(33,33,33)"/><rect y="8.0" width="1912" height="1.0" fill="rgb(8,8,8)"/><rect y="9.0" width="1912" height="2.5" fill="rgb(4,4,4)"/><rect y="11.5" width="1912" height="3.0" fill="rgb(50,50,50)"/><rect y="14.5" width="1912" height="1.0" fill="rgb(34,34,34)"/><rect y="15.5" width="1912" height="2.5" fill="rgb(37,37,37)"/><rect y="18.0" width="1912" height="1.0" fill="rgb(4,4,4)"/><rect y="19.0" width="1912" height="2.0" fill="rgb(36,36,36)"/><rect y="21.0" width="1912" height="1.0" fill="rgb(33,33,33)"/><rect y="22.0" width="1912" height="1.5" fill="rgb(34,34,34)"/><rect y="23.5" width="1912" height="1.0" fill="rgb(34,34,34)"/><rect x="766" y="23.9" width="303" height="1.0" fill="url(#bl11)" opacity="0.11"/><rect x="466" y="6.9" width="276" height="1.0" fill="url(#bl11)" opacity="0.10"/><rect x="28" y="7.0" width="209" height="1.0" fill="url(#bl11)" opacity="0.14"/><rect x="1590" y="5.0" width="150" height="1.0" fill="url(#bl11)" opacity="0.09"/><rect x="1871" y="1.8" width="369" height="2.0" fill="url(#bl11)" opacity="0.06"/><rect x="1225" y="7.5" width="335" height="1.0" fill="url(#bl11)" opacity="0.14"/><rect x="1401" y="5.9" width="215" height="1.0" fill="url(#bl11)" opacity="0.04"/><rect x="782" y="16.4" width="418" height="1.0" fill="url(#bl11)" opacity="0.08"/><rect x="203" y="3.1" width="553" height="2.0" fill="url(#bl11)" opacity="0.08"/><rect x="634" y="0.0" width="695" height="2.0" fill="url(#bl11)" opacity="0.07"/><rect x="1669" y="9.5" width="266" height="2.0" fill="url(#bl11)" opacity="0.10"/><rect x="12" y="5.1" width="694" height="1.5" fill="url(#bl11)" opacity="0.04"/><rect x="1089" y="9.3" width="607" height="1.0" fill="url(#bl11)" opacity="0.05"/><rect x="1031" y="14.4" width="284" height="1.5" fill="url(#bl11)" opacity="0.10"/><rect x="69" y="20.0" width="473" height="1.0" fill="url(#bl11)" opacity="0.13"/><rect x="186" y="21.8" width="235" height="2.0" fill="url(#bl11)" opacity="0.06"/><rect x="201" y="22.6" width="557" height="1.0" fill="url(#bl11)" opacity="0.11"/><rect x="620" y="1.9" width="415" height="1.0" fill="url(#bl11)" opacity="0.05"/><rect x="-118" y="5.7" width="679" height="2.0" fill="url(#bl11)" opacity="0.08"/><rect x="689" y="11.8" width="648" height="2.0" fill="url(#bl11)" opacity="0.06"/><rect x="1321" y="5.5" width="188" height="2.0" fill="url(#bl11)" opacity="0.11"/><rect x="1101" y="5.1" width="191" height="1.0" fill="url(#bl11)" opacity="0.11"/><rect x="-54" y="6.0" width="376" height="1.0" fill="url(#bl11)" opacity="0.06"/><rect x="579" y="3.2" width="465" height="1.5" fill="url(#bl11)" opacity="0.05"/><rect x="751" y="17.6" width="332" height="2.0" fill="url(#bl11)" opacity="0.10"/><rect x="96" y="0.4" width="169" height="1.5" fill="url(#bl11)" opacity="0.11"/><rect x="1833" y="15.3" width="162" height="1.5" fill="url(#bl11)" opacity="0.05"/><rect x="457" y="1.7" width="225" height="1.5" fill="url(#bl11)" opacity="0.09"/><rect x="1357" y="17.7" width="645" height="2.0" fill="url(#bl11)" opacity="0.05"/><rect x="1835" y="2.0" width="338" height="1.5" fill="url(#bl11)" opacity="0.13"/><rect x="1640" y="19.0" width="379" height="1.5" fill="url(#bl11)" opacity="0.10"/><rect x="1120" y="14.0" width="360" height="2.0" fill="url(#bl11)" opacity="0.05"/><rect x="-9" y="6.2" width="214" height="1.5" fill="url(#bl11)" opacity="0.11"/><rect x="620" y="13.9" width="554" height="1.5" fill="url(#bl11)" opacity="0.09"/><rect x="943" y="12.3" width="435" height="1.5" fill="url(#bl11)" opacity="0.10"/><rect x="816" y="16.8" width="277" height="1.5" fill="url(#bl11)" opacity="0.12"/><rect x="1194" y="21.5" width="417" height="1.5" fill="url(#bl11)" opacity="0.07"/><rect x="1232" y="4.1" width="261" height="1.5" fill="url(#bl11)" opacity="0.11"/><rect x="733" y="7.8" width="640" height="2.0" fill="url(#bl11)" opacity="0.07"/><rect x="1139" y="18.1" width="592" height="1.0" fill="url(#bl11)" opacity="0.13"/><rect x="612" y="7.6" width="471" height="1.0" fill="url(#bl11)" opacity="0.05"/><rect x="541" y="1.0" width="643" height="1.0" fill="url(#bl11)" opacity="0.14"/><rect x="385" y="10.8" width="243" height="1.5" fill="url(#bl11)" opacity="0.13"/><rect x="1555" y="12.5" width="360" height="2.0" fill="url(#bl11)" opacity="0.07"/><rect x="1572" y="10.9" width="690" height="1.0" fill="url(#bl11)" opacity="0.12"/><rect x="387" y="16.3" width="484" height="1.5" fill="url(#bl11)" opacity="0.10"/><rect x="453" y="0.5" width="585" height="1.0" fill="url(#bl11)" opacity="0.08"/><rect x="201" y="6.4" width="573" height="1.0" fill="url(#bl11)" opacity="0.12"/><rect x="1878" y="2.6" width="213" height="2.0" fill="url(#bl11)" opacity="0.11"/><rect x="1505" y="16.4" width="677" height="1.0" fill="url(#bl11)" opacity="0.12"/><rect x="341" y="18.1" width="543" height="2.0" fill="url(#bl11)" opacity="0.11"/><rect x="178" y="8.3" width="300" height="2.0" fill="url(#bl11)" opacity="0.13"/><rect x="857" y="3.8" width="698" height="2.0" fill="url(#bl11)" opacity="0.13"/><rect x="-16" y="17.3" width="663" height="1.0" fill="url(#bl11)" opacity="0.09"/><rect x="216" y="0.2" width="638" height="2.0" fill="url(#bl11)" opacity="0.10"/><rect x="1657" y="22.7" width="588" height="1.5" fill="url(#bl11)" opacity="0.07"/><rect x="1875" y="20.8" width="204" height="2.0" fill="url(#bl11)" opacity="0.13"/><rect x="61" y="9.4" width="283" height="1.0" fill="url(#bl11)" opacity="0.14"/><rect x="934" y="7.7" width="585" height="2.0" fill="url(#bl11)" opacity="0.13"/><rect x="536" y="10.6" width="196" height="2.0" fill="url(#bl11)" opacity="0.08"/><rect x="381" y="5.2" width="656" height="1.0" fill="url(#bl11)" opacity="0.08"/><rect x="-126" y="16.5" width="443" height="1.0" fill="url(#bl11)" opacity="0.09"/><rect x="1912" y="12.4" width="645" height="2.0" fill="url(#bl11)" opacity="0.11"/><rect x="1797" y="22.8" width="421" height="1.0" fill="url(#bl11)" opacity="0.12"/><rect x="728" y="19.9" width="457" height="2.0" fill="url(#bl11)" opacity="0.10"/><rect x="904" y="13.4" width="614" height="1.5" fill="url(#bl11)" opacity="0.11"/><rect x="1817" y="14.6" width="629" height="1.5" fill="url(#bl11)" opacity="0.13"/><rect x="1845" y="13.8" width="438" height="1.0" fill="url(#bl11)" opacity="0.08"/><rect x="41" y="9.0" width="153" height="2.0" fill="url(#bl11)" opacity="0.14"/><rect x="890" y="19.2" width="370" height="2.0" fill="url(#bl11)" opacity="0.05"/><rect x="-3" y="22.3" width="242" height="1.5" fill="url(#bl11)" opacity="0.08"/><rect x="1821" y="6.5" width="658" height="1.5" fill="url(#bl11)" opacity="0.09"/><rect x="517" y="22.5" width="645" height="1.5" fill="url(#bl11)" opacity="0.09"/><rect x="29" y="0.7" width="381" height="1.5" fill="url(#bl11)" opacity="0.05"/><rect x="1446" y="4.7" width="163" height="1.0" fill="url(#bl11)" opacity="0.04"/><rect x="400" y="5.9" width="548" height="1.5" fill="url(#bl11)" opacity="0.05"/><rect x="1344" y="12.3" width="205" height="2.0" fill="#000" opacity="0.42"/><rect x="1281" y="0.6" width="545" height="2.0" fill="#000" opacity="0.45"/><rect x="1101" y="20.7" width="392" height="1.0" fill="#000" opacity="0.36"/><rect x="1598" y="20.6" width="425" height="1.0" fill="#000" opacity="0.47"/><rect x="1126" y="4.3" width="306" height="2.0" fill="#000" opacity="0.47"/><rect x="211" y="4.7" width="500" height="1.0" fill="#000" opacity="0.24"/><rect x="306" y="6.2" width="477" height="1.0" fill="#000" opacity="0.33"/><rect x="1788" y="16.9" width="394" height="1.0" fill="#000" opacity="0.32"/><rect x="1247" y="4.8" width="158" height="2.0" fill="#000" opacity="0.47"/><rect x="1845" y="12.1" width="202" height="2.0" fill="#000" opacity="0.35"/><rect x="1248" y="1.7" width="235" height="1.0" fill="#000" opacity="0.21"/><rect x="1409" y="21.7" width="426" height="2.0" fill="#000" opacity="0.24"/><rect x="190" y="20.2" width="242" height="2.0" fill="#000" opacity="0.48"/><rect x="1" y="22.8" width="178" height="2.0" fill="#000" opacity="0.22"/><rect x="4" y="10.2" width="326" height="2.0" fill="#000" opacity="0.33"/><rect x="1069" y="16.8" width="156" height="1.0" fill="#000" opacity="0.25"/><rect x="759" y="9.7" width="483" height="1.0" fill="#000" opacity="0.38"/><rect x="0" y="7.8" width="507" height="1.0" fill="#000" opacity="0.44"/><rect x="1288" y="15.1" width="537" height="2.0" fill="#000" opacity="0.37"/><rect x="203" y="8.2" width="413" height="2.0" fill="#000" opacity="0.28"/><rect x="46" y="3.8" width="484" height="2.0" fill="#000" opacity="0.24"/><rect x="497" y="8.9" width="392" height="2.0" fill="#000" opacity="0.43"/><rect x="657" y="1.7" width="475" height="2.0" fill="#000" opacity="0.29"/><rect x="13" y="23.8" width="550" height="1.0" fill="#000" opacity="0.27"/><rect x="1795" y="8.1" width="450" height="2.0" fill="#000" opacity="0.37"/><rect x="926" y="24.0" width="325" height="1.0" fill="#000" opacity="0.41"/><rect x="1409" y="0.5" width="591" height="1.0" fill="#000" opacity="0.42"/><rect x="342" y="1.2" width="331" height="1.0" fill="#000" opacity="0.39"/><rect x="-177" y="6.6" width="266" height="2.0" fill="#000" opacity="0.37"/><rect x="873" y="13.6" width="585" height="1.0" fill="#000" opacity="0.39"/><rect x="1510" y="14.3" width="184" height="1.0" fill="#000" opacity="0.32"/><rect x="1782" y="23.3" width="324" height="2.0" fill="#000" opacity="0.36"/><rect x="1060" y="11.9" width="343" height="2.0" fill="#000" opacity="0.36"/><rect x="1063" y="6.9" width="315" height="2.0" fill="#000" opacity="0.37"/><rect x="399" y="7.1" width="472" height="1.0" fill="#000" opacity="0.43"/><rect x="1037" y="9.8" width="435" height="2.0" fill="#000" opacity="0.22"/><rect x="466" y="14.0" width="329" height="2.0" fill="#000" opacity="0.22"/><rect x="1713" y="11.5" width="343" height="1.0" fill="#000" opacity="0.21"/><rect x="8" y="21.8" width="515" height="1.0" fill="#000" opacity="0.49"/><rect x="1525" y="2.8" width="422" height="2.0" fill="#000" opacity="0.34"/><rect x="230" y="12.7" width="173" height="1.0" fill="#000" opacity="0.31"/><rect x="95" y="14.4" width="338" height="2.0" fill="#000" opacity="0.31"/><rect x="1371" y="3.3" width="517" height="2.0" fill="#000" opacity="0.42"/><rect x="304" y="21.4" width="201" height="2.0" fill="#000" opacity="0.28"/><rect x="1088" y="16.8" width="476" height="1.0" fill="#000" opacity="0.39"/><rect x="1391" y="6.0" width="235" height="1.0" fill="#000" opacity="0.46"/><rect x="-117" y="6.5" width="177" height="2.0" fill="#000" opacity="0.21"/></g></svg>
<div class="a" style="left:8.0px;top:1128.0px;width:1912.0px;height:1.5px;background:#0a0a0a;"></div>
<div class="t" style="left:31.3px;top:1141.0px;font-size:11.30px;line-height:11.30px;color:#7a7a7a;font-weight:bold;font-style:normal;">Design code:</div>
<div class="t" style="left:107.2px;top:1141.0px;font-size:10.70px;line-height:10.70px;color:#fff;font-weight:bold;font-style:normal;">EN</div>
<div class="t" style="left:142.5px;top:1142.0px;font-size:10.20px;line-height:10.20px;color:#7a7a7a;font-weight:bold;font-style:normal;">Analysis:</div>
<div class="t" style="left:193.7px;top:1141.0px;font-size:11.30px;line-height:11.30px;color:#fff;font-weight:bold;font-style:normal;">Fatigue</div>
<div class="t" style="left:254.6px;top:1141.0px;font-size:11.00px;line-height:11.00px;color:#7a7a7a;font-weight:bold;font-style:normal;">Units:</div>
<div class="t" style="left:294.3px;top:1140.0px;font-size:12.00px;line-height:12.00px;color:#fff;font-weight:bold;font-style:normal;">mm</div>
<div class="t" style="left:1517.6px;width:400px;text-align:right;top:1140.0px;font-size:12.00px;line-height:12.00px;color:#fff;font-weight:normal;font-style:normal;"><span style="color:#f36f21">www.</span>ideastatica<span style="color:#f36f21">.com</span></div>
<div class="a" style="left:1174.0px;top:166.0px;width:746.0px;height:25.0px;background:#f36f21;"></div>
<div class="a" style="left:1174.0px;top:191.0px;width:746.0px;height:544.0px;background:#fff;"></div>
<div class="a" style="left:1305.0px;top:170.0px;width:99.0px;height:21.0px;background:#f0f0f0;"></div>
<div class="t" style="left:1192.3px;top:175.0px;font-size:11.60px;line-height:11.60px;color:#fff;font-weight:normal;font-style:normal;">Analysis</div>
<div class="t" style="left:1261.0px;top:175.0px;font-size:11.60px;line-height:11.60px;color:#fff;font-weight:normal;font-style:normal;">Plates</div>
<div class="t" style="left:1318.0px;top:175.0px;font-size:11.60px;line-height:11.60px;color:#f36f21;font-weight:normal;font-style:normal;letter-spacing:0.1px">Weld sections</div>
<div class="t" style="left:1417.0px;top:175.0px;font-size:11.60px;line-height:11.60px;color:#fff;font-weight:normal;font-style:normal;letter-spacing:0.15px">Anchors</div>
<div class="t" style="left:1190.5px;top:208.7px;font-size:12.70px;line-height:12.70px;color:#f36f21;font-weight:bold;font-style:normal;">Nominal stresses in weld sections</div>
<div class="a" style="left:1185.2px;top:226.5px;width:516.3px;height:44.7px;background:#f0f0f0;"></div>
<div class="a" style="left:1185.2px;top:300.4px;width:516.3px;height:29.2px;background:#ececec;"></div>
<div class="a" style="left:1184.7px;top:226.5px;width:1.0px;height:219.5px;background:#c9c9c9;"></div>
<div class="a" style="left:1213.9px;top:226.5px;width:1.0px;height:219.5px;background:#c9c9c9;"></div>
<div class="a" style="left:1252.9px;top:226.5px;width:1.0px;height:219.5px;background:#c9c9c9;"></div>
<div class="a" style="left:1311.9px;top:226.5px;width:1.0px;height:219.5px;background:#c9c9c9;"></div>
<div class="a" style="left:1370.9px;top:226.5px;width:1.0px;height:219.5px;background:#c9c9c9;"></div>
<div class="a" style="left:1411.0px;top:226.5px;width:1.0px;height:219.5px;background:#c9c9c9;"></div>
<div class="a" style="left:1451.2px;top:226.5px;width:1.0px;height:219.5px;background:#c9c9c9;"></div>
<div class="a" style="left:1494.1px;top:226.5px;width:1.0px;height:219.5px;background:#c9c9c9;"></div>
<div class="a" style="left:1534.3px;top:226.5px;width:1.0px;height:219.5px;background:#c9c9c9;"></div>
<div class="a" style="left:1574.1px;top:226.5px;width:1.0px;height:219.5px;background:#c9c9c9;"></div>
<div class="a" style="left:1614.2px;top:226.5px;width:1.0px;height:219.5px;background:#c9c9c9;"></div>
<div class="a" style="left:1654.3px;top:226.5px;width:1.0px;height:219.5px;background:#c9c9c9;"></div>
<div class="a" style="left:1701.0px;top:226.5px;width:1.0px;height:219.5px;background:#c9c9c9;"></div>
<div class="a" style="left:1185.2px;top:226.0px;width:516.3px;height:1.0px;background:#c9c9c9;"></div>
<div class="a" style="left:1185.2px;top:270.7px;width:516.3px;height:1.0px;background:#c9c9c9;"></div>
<div class="a" style="left:1185.2px;top:299.9px;width:516.3px;height:1.0px;background:#c9c9c9;"></div>
<div class="a" style="left:1185.2px;top:329.1px;width:516.3px;height:1.0px;background:#c9c9c9;"></div>
<div class="a" style="left:1185.2px;top:358.1px;width:516.3px;height:1.0px;background:#c9c9c9;"></div>
<div class="a" style="left:1185.2px;top:387.0px;width:516.3px;height:1.0px;background:#c9c9c9;"></div>
<div class="a" style="left:1185.2px;top:416.1px;width:516.3px;height:1.0px;background:#c9c9c9;"></div>
<div class="a" style="left:1185.2px;top:445.5px;width:516.3px;height:1.0px;background:#c9c9c9;"></div>
<div class="a" style="left:1184.5px;top:225.8px;width:517.7px;height:220.9px;border:1.5px solid #a9a9a9"></div>
<div class="t" style="left:1218.9px;top:244.5px;font-size:11.60px;line-height:11.60px;color:#333;font-weight:bold;font-style:normal;">Item</div>
<div class="t" style="left:1257.9px;top:244.5px;font-size:11.60px;line-height:11.60px;color:#333;font-weight:bold;font-style:normal;">Edge</div>
<div class="t" style="left:1316.9px;top:244.5px;font-size:11.60px;line-height:11.60px;color:#333;font-weight:bold;font-style:normal;">Section</div>
<div class="t" style="left:1456.2px;top:244.5px;font-size:11.60px;line-height:11.60px;color:#333;font-weight:bold;font-style:normal;">Loads</div>
<div class="t" style="left:1659.3px;top:244.5px;font-size:11.60px;line-height:11.60px;color:#333;font-weight:bold;font-style:normal;">Elastic</div>
<div class="t" style="left:1375.9px;top:237.5px;font-size:11.60px;line-height:11.60px;color:#333;font-weight:bold;font-style:normal;">Th</div>
<div class="t" style="left:1416.0px;top:237.5px;font-size:11.60px;line-height:11.60px;color:#333;font-weight:bold;font-style:normal;">L</div>
<div class="t" style="left:1499.1px;top:237.5px;font-size:11.60px;line-height:11.60px;color:#333;font-weight:bold;font-style:normal;">&sigma;<span style="font-size:8.5px;position:relative;top:2px;margin-left:1px">max</span></div>
<div class="t" style="left:1539.3px;top:237.5px;font-size:11.60px;line-height:11.60px;color:#333;font-weight:bold;font-style:normal;">&tau;</div>
<div class="t" style="left:1579.1px;top:237.5px;font-size:11.60px;line-height:11.60px;color:#333;font-weight:bold;font-style:normal;">&tau;<span style="font-size:8.5px;position:relative;top:2px;margin-left:1px">max</span></div>
<div class="t" style="left:1619.2px;top:237.5px;font-size:11.60px;line-height:11.60px;color:#333;font-weight:bold;font-style:normal;">&sigma;</div>
<div class="t" style="left:1375.9px;top:255.0px;font-size:9.80px;line-height:9.80px;color:#333;font-weight:normal;font-style:normal;">[mm]</div>
<div class="t" style="left:1416.0px;top:255.0px;font-size:9.80px;line-height:9.80px;color:#333;font-weight:normal;font-style:normal;">[mm]</div>
<div class="t" style="left:1499.1px;top:255.0px;font-size:9.80px;line-height:9.80px;color:#333;font-weight:normal;font-style:normal;">[MPa]</div>
<div class="t" style="left:1539.3px;top:255.0px;font-size:9.80px;line-height:9.80px;color:#333;font-weight:normal;font-style:normal;">[MPa]</div>
<div class="t" style="left:1579.1px;top:255.0px;font-size:9.80px;line-height:9.80px;color:#333;font-weight:normal;font-style:normal;">[MPa]</div>
<div class="t" style="left:1619.2px;top:255.0px;font-size:9.80px;line-height:9.80px;color:#333;font-weight:normal;font-style:normal;">[MPa]</div>
<div class="t" style="left:1218.9px;top:280.1px;font-size:11.60px;line-height:11.60px;color:#333;font-weight:normal;font-style:normal;">BP1</div>
<div class="t" style="left:1257.9px;top:280.1px;font-size:11.60px;line-height:11.60px;color:#333;font-weight:normal;font-style:normal;">COL-bfl 1</div>
<div class="t" style="left:1316.9px;top:280.1px;font-size:11.60px;line-height:11.60px;color:#333;font-weight:normal;font-style:normal;">BP1</div>
<div class="t" style="left:1375.9px;top:280.1px;font-size:11.60px;line-height:11.60px;color:#333;font-weight:normal;font-style:normal;">24.0</div>
<div class="t" style="left:1416.0px;top:280.1px;font-size:11.60px;line-height:11.60px;color:#333;font-weight:normal;font-style:normal;">300.0</div>
<div class="t" style="left:1456.2px;top:280.1px;font-size:11.60px;line-height:11.60px;color:#333;font-weight:normal;font-style:normal;">LE2</div>
<div class="t" style="left:1499.1px;top:280.1px;font-size:11.60px;line-height:11.60px;color:#333;font-weight:normal;font-style:normal;">-5.7</div>
<div class="t" style="left:1539.3px;top:280.1px;font-size:11.60px;line-height:11.60px;color:#333;font-weight:normal;font-style:normal;">7.5</div>
<div class="t" style="left:1579.1px;top:280.1px;font-size:11.60px;line-height:11.60px;color:#333;font-weight:normal;font-style:normal;">9.8</div>
<div class="t" style="left:1619.2px;top:280.1px;font-size:11.60px;line-height:11.60px;color:#333;font-weight:normal;font-style:normal;">1.9</div>
<svg class="a" style="left:1668.5px;top:276.8px;" width="18" height="18" viewBox="0 0 18 18"><defs><linearGradient id="gck" x1="0" y1="0" x2="0" y2="1"><stop offset="0" stop-color="#7ee07a"/><stop offset="1" stop-color="#2fb32f"/></linearGradient></defs>
<circle cx="9" cy="9" r="8.3" fill="url(#gck)" stroke="#3aa83a" stroke-width="0.6"/><path d="M4.6,9.2 L7.8,12.3 L13.5,5.8" fill="none" stroke="#fff" stroke-width="2.2" stroke-linecap="round" stroke-linejoin="round"/></svg>
<div class="t" style="left:1218.9px;top:309.3px;font-size:11.60px;line-height:11.60px;color:#333;font-weight:normal;font-style:normal;">BP1</div>
<div class="t" style="left:1257.9px;top:309.3px;font-size:11.60px;line-height:11.60px;color:#333;font-weight:normal;font-style:normal;">COL-bfl 1</div>
<div class="t" style="left:1316.9px;top:309.3px;font-size:11.60px;line-height:11.60px;color:#333;font-weight:normal;font-style:normal;">COL-bfl 1</div>
<div class="t" style="left:1375.9px;top:309.3px;font-size:11.60px;line-height:11.60px;color:#333;font-weight:normal;font-style:normal;">24.0</div>
<div class="t" style="left:1416.0px;top:309.3px;font-size:11.60px;line-height:11.60px;color:#333;font-weight:normal;font-style:normal;">300.0</div>
<div class="t" style="left:1456.2px;top:309.3px;font-size:11.60px;line-height:11.60px;color:#333;font-weight:normal;font-style:normal;">LE2</div>
<div class="t" style="left:1499.1px;top:309.3px;font-size:11.60px;line-height:11.60px;color:#333;font-weight:normal;font-style:normal;">275.6</div>
<div class="t" style="left:1539.3px;top:309.3px;font-size:11.60px;line-height:11.60px;color:#333;font-weight:normal;font-style:normal;">-27.2</div>
<div class="t" style="left:1579.1px;top:309.3px;font-size:11.60px;line-height:11.60px;color:#333;font-weight:normal;font-style:normal;">-27.2</div>
<div class="t" style="left:1619.2px;top:309.3px;font-size:11.60px;line-height:11.60px;color:#333;font-weight:normal;font-style:normal;">275.6</div>
<svg class="a" style="left:1668.5px;top:306.0px;" width="18" height="18" viewBox="0 0 18 18"><defs><linearGradient id="gck" x1="0" y1="0" x2="0" y2="1"><stop offset="0" stop-color="#7ee07a"/><stop offset="1" stop-color="#2fb32f"/></linearGradient></defs>
<circle cx="9" cy="9" r="8.3" fill="url(#gck)" stroke="#3aa83a" stroke-width="0.6"/><path d="M4.6,9.2 L7.8,12.3 L13.5,5.8" fill="none" stroke="#fff" stroke-width="2.2" stroke-linecap="round" stroke-linejoin="round"/></svg>
<div class="t" style="left:1218.9px;top:338.4px;font-size:11.60px;line-height:11.60px;color:#333;font-weight:normal;font-style:normal;">BP1</div>
<div class="t" style="left:1257.9px;top:338.4px;font-size:11.60px;line-height:11.60px;color:#333;font-weight:normal;font-style:normal;">COL-tfl 1</div>
<div class="t" style="left:1316.9px;top:338.4px;font-size:11.60px;line-height:11.60px;color:#333;font-weight:normal;font-style:normal;">BP1</div>
<div class="t" style="left:1375.9px;top:338.4px;font-size:11.60px;line-height:11.60px;color:#333;font-weight:normal;font-style:normal;">24.0</div>
<div class="t" style="left:1416.0px;top:338.4px;font-size:11.60px;line-height:11.60px;color:#333;font-weight:normal;font-style:normal;">300.0</div>
<div class="t" style="left:1456.2px;top:338.4px;font-size:11.60px;line-height:11.60px;color:#333;font-weight:normal;font-style:normal;">LE2</div>
<div class="t" style="left:1499.1px;top:338.4px;font-size:11.60px;line-height:11.60px;color:#333;font-weight:normal;font-style:normal;">3.5</div>
<div class="t" style="left:1539.3px;top:338.4px;font-size:11.60px;line-height:11.60px;color:#333;font-weight:normal;font-style:normal;">5.0</div>
<div class="t" style="left:1579.1px;top:338.4px;font-size:11.60px;line-height:11.60px;color:#333;font-weight:normal;font-style:normal;">9.4</div>
<div class="t" style="left:1619.2px;top:338.4px;font-size:11.60px;line-height:11.60px;color:#333;font-weight:normal;font-style:normal;">-2.8</div>
<svg class="a" style="left:1668.5px;top:335.1px;" width="18" height="18" viewBox="0 0 18 18"><defs><linearGradient id="gck" x1="0" y1="0" x2="0" y2="1"><stop offset="0" stop-color="#7ee07a"/><stop offset="1" stop-color="#2fb32f"/></linearGradient></defs>
<circle cx="9" cy="9" r="8.3" fill="url(#gck)" stroke="#3aa83a" stroke-width="0.6"/><path d="M4.6,9.2 L7.8,12.3 L13.5,5.8" fill="none" stroke="#fff" stroke-width="2.2" stroke-linecap="round" stroke-linejoin="round"/></svg>
<div class="t" style="left:1218.9px;top:367.4px;font-size:11.60px;line-height:11.60px;color:#333;font-weight:normal;font-style:normal;">BP1</div>
<div class="t" style="left:1257.9px;top:367.4px;font-size:11.60px;line-height:11.60px;color:#333;font-weight:normal;font-style:normal;">COL-tfl 1</div>
<div class="t" style="left:1316.9px;top:367.4px;font-size:11.60px;line-height:11.60px;color:#333;font-weight:normal;font-style:normal;">COL-tfl 1</div>
<div class="t" style="left:1375.9px;top:367.4px;font-size:11.60px;line-height:11.60px;color:#333;font-weight:normal;font-style:normal;">24.0</div>
<div class="t" style="left:1416.0px;top:367.4px;font-size:11.60px;line-height:11.60px;color:#333;font-weight:normal;font-style:normal;">300.0</div>
<div class="t" style="left:1456.2px;top:367.4px;font-size:11.60px;line-height:11.60px;color:#333;font-weight:normal;font-style:normal;">LE2</div>
<div class="t" style="left:1499.1px;top:367.4px;font-size:11.60px;line-height:11.60px;color:#333;font-weight:normal;font-style:normal;">275.9</div>
<div class="t" style="left:1539.3px;top:367.4px;font-size:11.60px;line-height:11.60px;color:#333;font-weight:normal;font-style:normal;">26.3</div>
<div class="t" style="left:1579.1px;top:367.4px;font-size:11.60px;line-height:11.60px;color:#333;font-weight:normal;font-style:normal;">27.3</div>
<div class="t" style="left:1619.2px;top:367.4px;font-size:11.60px;line-height:11.60px;color:#333;font-weight:normal;font-style:normal;">-275.2</div>
<svg class="a" style="left:1668.5px;top:364.1px;" width="18" height="18" viewBox="0 0 18 18"><defs><linearGradient id="gck" x1="0" y1="0" x2="0" y2="1"><stop offset="0" stop-color="#7ee07a"/><stop offset="1" stop-color="#2fb32f"/></linearGradient></defs>
<circle cx="9" cy="9" r="8.3" fill="url(#gck)" stroke="#3aa83a" stroke-width="0.6"/><path d="M4.6,9.2 L7.8,12.3 L13.5,5.8" fill="none" stroke="#fff" stroke-width="2.2" stroke-linecap="round" stroke-linejoin="round"/></svg>
<div class="t" style="left:1218.9px;top:396.4px;font-size:11.60px;line-height:11.60px;color:#333;font-weight:normal;font-style:normal;">BP1</div>
<div class="t" style="left:1257.9px;top:396.4px;font-size:11.60px;line-height:11.60px;color:#333;font-weight:normal;font-style:normal;">COL-w 1</div>
<div class="t" style="left:1316.9px;top:396.4px;font-size:11.60px;line-height:11.60px;color:#333;font-weight:normal;font-style:normal;">BP1</div>
<div class="t" style="left:1375.9px;top:396.4px;font-size:11.60px;line-height:11.60px;color:#333;font-weight:normal;font-style:normal;">13.5</div>
<div class="t" style="left:1416.0px;top:396.4px;font-size:11.60px;line-height:11.60px;color:#333;font-weight:normal;font-style:normal;">376.0</div>
<div class="t" style="left:1456.2px;top:396.4px;font-size:11.60px;line-height:11.60px;color:#333;font-weight:normal;font-style:normal;">LE2</div>
<div class="t" style="left:1499.1px;top:396.4px;font-size:11.60px;line-height:11.60px;color:#333;font-weight:normal;font-style:normal;">-1.4</div>
<div class="t" style="left:1539.3px;top:396.4px;font-size:11.60px;line-height:11.60px;color:#333;font-weight:normal;font-style:normal;">-12.1</div>
<div class="t" style="left:1579.1px;top:396.4px;font-size:11.60px;line-height:11.60px;color:#333;font-weight:normal;font-style:normal;">-12.9</div>
<div class="t" style="left:1619.2px;top:396.4px;font-size:11.60px;line-height:11.60px;color:#333;font-weight:normal;font-style:normal;">0.0</div>
<svg class="a" style="left:1668.5px;top:393.1px;" width="18" height="18" viewBox="0 0 18 18"><defs><linearGradient id="gck" x1="0" y1="0" x2="0" y2="1"><stop offset="0" stop-color="#7ee07a"/><stop offset="1" stop-color="#2fb32f"/></linearGradient></defs>
<circle cx="9" cy="9" r="8.3" fill="url(#gck)" stroke="#3aa83a" stroke-width="0.6"/><path d="M4.6,9.2 L7.8,12.3 L13.5,5.8" fill="none" stroke="#fff" stroke-width="2.2" stroke-linecap="round" stroke-linejoin="round"/></svg>
<div class="t" style="left:1218.9px;top:425.6px;font-size:11.60px;line-height:11.60px;color:#333;font-weight:normal;font-style:normal;">BP1</div>
<div class="t" style="left:1257.9px;top:425.6px;font-size:11.60px;line-height:11.60px;color:#333;font-weight:normal;font-style:normal;">COL-w 1</div>
<div class="t" style="left:1316.9px;top:425.6px;font-size:11.60px;line-height:11.60px;color:#333;font-weight:normal;font-style:normal;">COL-w 1</div>
<div class="t" style="left:1375.9px;top:425.6px;font-size:11.60px;line-height:11.60px;color:#333;font-weight:normal;font-style:normal;">13.5</div>
<div class="t" style="left:1416.0px;top:425.6px;font-size:11.60px;line-height:11.60px;color:#333;font-weight:normal;font-style:normal;">376.0</div>
<div class="t" style="left:1456.2px;top:425.6px;font-size:11.60px;line-height:11.60px;color:#333;font-weight:normal;font-style:normal;">LE2</div>
<div class="t" style="left:1499.1px;top:425.6px;font-size:11.60px;line-height:11.60px;color:#333;font-weight:normal;font-style:normal;">11.5</div>
<div class="t" style="left:1539.3px;top:425.6px;font-size:11.60px;line-height:11.60px;color:#333;font-weight:normal;font-style:normal;">-0.4</div>
<div class="t" style="left:1579.1px;top:425.6px;font-size:11.60px;line-height:11.60px;color:#333;font-weight:normal;font-style:normal;">-3.7</div>
<div class="t" style="left:1619.2px;top:425.6px;font-size:11.60px;line-height:11.60px;color:#333;font-weight:normal;font-style:normal;">-2.7</div>
<svg class="a" style="left:1668.5px;top:422.3px;" width="18" height="18" viewBox="0 0 18 18"><defs><linearGradient id="gck" x1="0" y1="0" x2="0" y2="1"><stop offset="0" stop-color="#7ee07a"/><stop offset="1" stop-color="#2fb32f"/></linearGradient></defs>
<circle cx="9" cy="9" r="8.3" fill="url(#gck)" stroke="#3aa83a" stroke-width="0.6"/><path d="M4.6,9.2 L7.8,12.3 L13.5,5.8" fill="none" stroke="#fff" stroke-width="2.2" stroke-linecap="round" stroke-linejoin="round"/></svg>
<svg class="a" style="left:1195.0px;top:308.0px;" width="8" height="12" viewBox="0 0 8 12"><path d="M1.5,1.5 L6,6 L1.5,10.5" fill="none" stroke="#444" stroke-width="1.3"/></svg>
<div class="a" style="left:1254px;top:301px;width:58px;height:28px;border:1px solid #f36f21"></div>
<div class="a" style="left:1174.0px;top:735.0px;width:746.0px;height:6.0px;background:#cbcbcb;"></div>
<div class="a" style="left:1174.0px;top:735.0px;width:746.0px;height:1.2px;background:#a9a9a9;"></div>
<div class="a" style="left:1174.0px;top:741.0px;width:746.0px;height:387.0px;background:#fff;"></div>
<div class="a" style="left:1177px;top:744px;width:24px;height:24px;border:1px solid #b8b8b8;background:linear-gradient(#f2f2f2,#d2d2d2)"></div>
<svg class="a" style="left:1177.0px;top:744.0px;" width="24" height="24" viewBox="0 0 24 24"><path d="M6,6 L10,10 M18,6 L14,10 M6,18 L10,14 M18,18 L14,14" stroke="#555" stroke-width="1.3"/><path d="M5,5 H8.5 L5,8.5 Z M19,5 H15.5 L19,8.5 Z M5,19 H8.5 L5,15.5 Z M19,19 H15.5 L19,15.5 Z" fill="#555"/></svg>
<svg class="a" style="left:1174.0px;top:741.0px;" width="746" height="387" viewBox="0 0 746 387"><defs><pattern id="hatch" width="2.3" height="10" patternUnits="userSpaceOnUse"><rect width="2.3" height="10" fill="#93cef2"/><rect x="1.5" width="0.8" height="10" fill="#73b3df"/></pattern>
<filter id="sh" x="-20%" y="-20%" width="140%" height="140%"><feGaussianBlur in="SourceAlpha" stdDeviation="1.2"/><feOffset dx="1" dy="1.5"/><feComponentTransfer><feFuncA type="linear" slope="0.35"/></feComponentTransfer><feMerge><feMergeNode/><feMergeNode in="SourceGraphic"/></feMerge></filter></defs><path d="M129.00,218.00 L129.00,353.98 L131.75,353.98 L131.75,350.20 L134.50,350.20 L134.50,346.47 L137.25,346.47 L137.25,342.81 L140.00,342.81 L140.00,339.21 L142.75,339.21 L142.75,335.67 L145.50,335.67 L145.50,332.19 L148.25,332.19 L148.25,328.76 L151.00,328.76 L151.00,325.39 L153.75,325.39 L153.75,322.07 L156.50,322.07 L156.50,318.81 L159.25,318.81 L159.25,315.60 L162.00,315.60 L162.00,312.44 L164.75,312.44 L164.75,309.33 L167.50,309.33 L167.50,306.27 L170.25,306.27 L170.25,303.25 L173.00,303.25 L173.00,300.28 L175.75,300.28 L175.75,297.35 L178.50,297.35 L178.50,294.47 L181.25,294.47 L181.25,291.62 L184.00,291.62 L184.00,288.82 L186.75,288.82 L186.75,286.06 L189.50,286.06 L189.50,283.33 L192.25,283.33 L192.25,280.64 L195.00,280.64 L195.00,277.98 L197.75,277.98 L197.75,275.36 L200.50,275.36 L200.50,272.76 L203.25,272.76 L203.25,270.20 L206.00,270.20 L206.00,267.67 L208.75,267.67 L208.75,265.17 L211.50,265.17 L211.50,262.69 L214.25,262.69 L214.25,260.24 L217.00,260.24 L217.00,257.82 L219.75,257.82 L219.75,255.41 L222.50,255.41 L222.50,253.03 L225.25,253.03 L225.25,250.67 L228.00,250.67 L228.00,248.33 L230.75,248.33 L230.75,246.00 L233.50,246.00 L233.50,243.70 L236.25,243.70 L236.25,241.40 L239.00,241.40 L239.00,239.12 L241.75,239.12 L241.75,236.86 L244.50,236.86 L244.50,234.60 L247.25,234.60 L247.25,232.35 L250.00,232.35 L250.00,230.12 L252.75,230.12 L252.75,227.88 L255.50,227.88 L255.50,225.66 L258.25,225.66 L258.25,223.44 L261.00,223.44 L261.00,221.22 L263.75,221.22 L263.75,219.01 L266.50,219.01 L266.50,216.79 L269.25,216.79 L269.25,214.58 L272.00,214.58 L272.00,212.36 L274.75,212.36 L274.75,210.14 L277.50,210.14 L277.50,207.91 L280.25,207.91 L280.25,205.68 L283.00,205.68 L283.00,203.44 L285.75,203.44 L285.75,201.20 L288.50,201.20 L288.50,198.94 L291.25,198.94 L291.25,196.67 L294.00,196.67 L294.00,194.39 L296.75,194.39 L296.75,192.10 L299.50,192.10 L299.50,189.79 L302.25,189.79 L302.25,187.46 L305.00,187.46 L305.00,185.11 L307.75,185.11 L307.75,182.75 L310.50,182.75 L310.50,180.37 L313.25,180.37 L313.25,177.96 L316.00,177.96 L316.00,175.53 L318.75,175.53 L318.75,173.08 L321.50,173.08 L321.50,170.60 L324.25,170.60 L324.25,168.10 L327.00,168.10 L327.00,165.56 L329.75,165.56 L329.75,163.00 L332.50,163.00 L332.50,160.41 L335.25,160.41 L335.25,157.78 L338.00,157.78 L338.00,155.12 L340.75,155.12 L340.75,152.43 L343.50,152.43 L343.50,149.70 L346.25,149.70 L346.25,146.93 L349.00,146.93 L349.00,144.12 L351.75,144.12 L351.75,141.27 L354.50,141.27 L354.50,138.38 L357.25,138.38 L357.25,135.45 L360.00,135.45 L360.00,132.48 L362.75,132.48 L362.75,129.46 L365.50,129.46 L365.50,126.39 L368.25,126.39 L368.25,123.27 L371.00,123.27 L371.00,120.11 L373.75,120.11 L373.75,116.89 L376.50,116.89 L376.50,113.63 L379.25,113.63 L379.25,110.31 L382.00,110.31 L382.00,106.93 L384.75,106.93 L384.75,103.50 L387.50,103.50 L387.50,100.01 L390.25,100.01 L390.25,96.47 L393.00,96.47 L393.00,92.86 L395.75,92.86 L395.75,89.19 L398.50,89.19 L398.50,85.46 L400.20,85.46 L400.20,83.13 L400.20,218.00 Z" fill="url(#hatch)"/><path d="M129.00,218.00 H400.20" stroke="#444" stroke-width="0.9"/><path d="M400.20,218.00 V83.13" stroke="#555" stroke-width="0.6"/><path d="M129.00,353.98 L131.75,353.98 L131.75,350.20 L134.50,350.20 L134.50,346.47 L137.25,346.47 L137.25,342.81 L140.00,342.81 L140.00,339.21 L142.75,339.21 L142.75,335.67 L145.50,335.67 L145.50,332.19 L148.25,332.19 L148.25,328.76 L151.00,328.76 L151.00,325.39 L153.75,325.39 L153.75,322.07 L156.50,322.07 L156.50,318.81 L159.25,318.81 L159.25,315.60 L162.00,315.60 L162.00,312.44 L164.75,312.44 L164.75,309.33 L167.50,309.33 L167.50,306.27 L170.25,306.27 L170.25,303.25 L173.00,303.25 L173.00,300.28 L175.75,300.28 L175.75,297.35 L178.50,297.35 L178.50,294.47 L181.25,294.47 L181.25,291.62 L184.00,291.62 L184.00,288.82 L186.75,288.82 L186.75,286.06 L189.50,286.06 L189.50,283.33 L192.25,283.33 L192.25,280.64 L195.00,280.64 L195.00,277.98 L197.75,277.98 L197.75,275.36 L200.50,275.36 L200.50,272.76 L203.25,272.76 L203.25,270.20 L206.00,270.20 L206.00,267.67 L208.75,267.67 L208.75,265.17 L211.50,265.17 L211.50,262.69 L214.25,262.69 L214.25,260.24 L217.00,260.24 L217.00,257.82 L219.75,257.82 L219.75,255.41 L222.50,255.41 L222.50,253.03 L225.25,253.03 L225.25,250.67 L228.00,250.67 L228.00,248.33 L230.75,248.33 L230.75,246.00 L233.50,246.00 L233.50,243.70 L236.25,243.70 L236.25,241.40 L239.00,241.40 L239.00,239.12 L241.75,239.12 L241.75,236.86 L244.50,236.86 L244.50,234.60 L247.25,234.60 L247.25,232.35 L250.00,232.35 L250.00,230.12 L252.75,230.12 L252.75,227.88 L255.50,227.88 L255.50,225.66 L258.25,225.66 L258.25,223.44 L261.00,223.44 L261.00,221.22 L263.75,221.22 L263.75,219.01 L266.50,219.01 L266.50,216.79 L269.25,216.79 L269.25,214.58 L272.00,214.58 L272.00,212.36 L274.75,212.36 L274.75,210.14 L277.50,210.14 L277.50,207.91 L280.25,207.91 L280.25,205.68 L283.00,205.68 L283.00,203.44 L285.75,203.44 L285.75,201.20 L288.50,201.20 L288.50,198.94 L291.25,198.94 L291.25,196.67 L294.00,196.67 L294.00,194.39 L296.75,194.39 L296.75,192.10 L299.50,192.10 L299.50,189.79 L302.25,189.79 L302.25,187.46 L305.00,187.46 L305.00,185.11 L307.75,185.11 L307.75,182.75 L310.50,182.75 L310.50,180.37 L313.25,180.37 L313.25,177.96 L316.00,177.96 L316.00,175.53 L318.75,175.53 L318.75,173.08 L321.50,173.08 L321.50,170.60 L324.25,170.60 L324.25,168.10 L327.00,168.10 L327.00,165.56 L329.75,165.56 L329.75,163.00 L332.50,163.00 L332.50,160.41 L335.25,160.41 L335.25,157.78 L338.00,157.78 L338.00,155.12 L340.75,155.12 L340.75,152.43 L343.50,152.43 L343.50,149.70 L346.25,149.70 L346.25,146.93 L349.00,146.93 L349.00,144.12 L351.75,144.12 L351.75,141.27 L354.50,141.27 L354.50,138.38 L357.25,138.38 L357.25,135.45 L360.00,135.45 L360.00,132.48 L362.75,132.48 L362.75,129.46 L365.50,129.46 L365.50,126.39 L368.25,126.39 L368.25,123.27 L371.00,123.27 L371.00,120.11 L373.75,120.11 L373.75,116.89 L376.50,116.89 L376.50,113.63 L379.25,113.63 L379.25,110.31 L382.00,110.31 L382.00,106.93 L384.75,106.93 L384.75,103.50 L387.50,103.50 L387.50,100.01 L390.25,100.01 L390.25,96.47 L393.00,96.47 L393.00,92.86 L395.75,92.86 L395.75,89.19 L398.50,89.19 L398.50,85.46 L400.20,85.46 L400.20,83.13" fill="none" stroke="#111" stroke-width="1.1"/><path d="M540.20,168.50 L540.20,269.60 L542.95,269.60 L542.95,262.93 L545.70,262.93 L545.70,256.27 L548.45,256.27 L548.45,249.60 L551.20,249.60 L551.20,242.93 L553.95,242.93 L553.95,236.26 L556.70,236.26 L556.70,229.60 L559.45,229.60 L559.45,222.93 L562.20,222.93 L562.20,216.26 L564.95,216.26 L564.95,209.59 L567.70,209.59 L567.70,202.93 L570.45,202.93 L570.45,196.26 L573.20,196.26 L573.20,189.59 L575.95,189.59 L575.95,182.93 L578.70,182.93 L578.70,176.26 L581.45,176.26 L581.45,169.59 L584.20,169.59 L584.20,170.48 L586.95,170.48 L586.95,172.85 L589.70,172.85 L589.70,175.23 L592.45,175.23 L592.45,177.60 L595.20,177.60 L595.20,179.97 L597.95,179.97 L597.95,182.34 L600.70,182.34 L600.70,184.71 L603.45,184.71 L603.45,183.86 L606.20,183.86 L606.20,181.69 L608.95,181.69 L608.95,179.52 L611.70,179.52 L611.70,177.35 L614.45,177.35 L614.45,175.18 L617.20,175.18 L617.20,173.01 L619.95,173.01 L619.95,170.83 L622.70,170.83 L622.70,168.87 L625.45,168.87 L625.45,168.56 L628.20,168.56 L628.20,168.25 L630.95,168.25 L630.95,167.94 L633.70,167.94 L633.70,167.63 L636.45,167.63 L636.45,167.49 L639.20,167.49 L639.20,167.37 L641.95,167.37 L641.95,167.25 L644.70,167.25 L644.70,167.12 L647.45,167.12 L647.45,167.00 L650.20,167.00 L650.20,167.13 L652.95,167.13 L652.95,167.26 L655.70,167.26 L655.70,167.39 L658.45,167.39 L658.45,167.91 L661.20,167.91 L661.20,168.48 L663.95,168.48 L663.95,169.54 L666.70,169.54 L666.70,171.89 L669.45,171.89 L669.45,174.24 L672.20,174.24 L672.20,176.59 L674.95,176.59 L674.95,178.94 L677.70,178.94 L677.70,181.29 L680.45,181.29 L680.45,183.64 L683.20,183.64 L683.20,185.81 L685.95,185.81 L685.95,183.30 L688.70,183.30 L688.70,180.80 L691.45,180.80 L691.45,178.29 L694.20,178.29 L694.20,175.79 L696.95,175.79 L696.95,173.28 L699.70,173.28 L699.70,170.78 L702.45,170.78 L702.45,169.12 L705.20,169.12 L705.20,175.99 L707.95,175.99 L707.95,182.86 L710.70,182.86 L710.70,189.73 L713.45,189.73 L713.45,196.60 L716.20,196.60 L716.20,203.47 L718.95,203.47 L718.95,210.33 L721.70,210.33 L721.70,217.20 L724.45,217.20 L724.45,224.07 L727.20,224.07 L727.20,230.94 L729.95,230.94 L729.95,237.81 L732.70,237.81 L732.70,244.68 L735.45,244.68 L735.45,251.54 L738.20,251.54 L738.20,258.41 L740.95,258.41 L740.95,265.28 L743.00,265.28 L743.00,270.40 L743.00,168.50 Z" fill="url(#hatch)"/><path d="M540.20,168.50 H744.00" stroke="#444" stroke-width="0.9"/><path d="M540.20,269.60 L542.95,269.60 L542.95,262.93 L545.70,262.93 L545.70,256.27 L548.45,256.27 L548.45,249.60 L551.20,249.60 L551.20,242.93 L553.95,242.93 L553.95,236.26 L556.70,236.26 L556.70,229.60 L559.45,229.60 L559.45,222.93 L562.20,222.93 L562.20,216.26 L564.95,216.26 L564.95,209.59 L567.70,209.59 L567.70,202.93 L570.45,202.93 L570.45,196.26 L573.20,196.26 L573.20,189.59 L575.95,189.59 L575.95,182.93 L578.70,182.93 L578.70,176.26 L581.45,176.26 L581.45,169.59 L584.20,169.59 L584.20,170.48 L586.95,170.48 L586.95,172.85 L589.70,172.85 L589.70,175.23 L592.45,175.23 L592.45,177.60 L595.20,177.60 L595.20,179.97 L597.95,179.97 L597.95,182.34 L600.70,182.34 L600.70,184.71 L603.45,184.71 L603.45,183.86 L606.20,183.86 L606.20,181.69 L608.95,181.69 L608.95,179.52 L611.70,179.52 L611.70,177.35 L614.45,177.35 L614.45,175.18 L617.20,175.18 L617.20,173.01 L619.95,173.01 L619.95,170.83 L622.70,170.83 L622.70,168.87 L625.45,168.87 L625.45,168.56 L628.20,168.56 L628.20,168.25 L630.95,168.25 L630.95,167.94 L633.70,167.94 L633.70,167.63 L636.45,167.63 L636.45,167.49 L639.20,167.49 L639.20,167.37 L641.95,167.37 L641.95,167.25 L644.70,167.25 L644.70,167.12 L647.45,167.12 L647.45,167.00 L650.20,167.00 L650.20,167.13 L652.95,167.13 L652.95,167.26 L655.70,167.26 L655.70,167.39 L658.45,167.39 L658.45,167.91 L661.20,167.91 L661.20,168.48 L663.95,168.48 L663.95,169.54 L666.70,169.54 L666.70,171.89 L669.45,171.89 L669.45,174.24 L672.20,174.24 L672.20,176.59 L674.95,176.59 L674.95,178.94 L677.70,178.94 L677.70,181.29 L680.45,181.29 L680.45,183.64 L683.20,183.64 L683.20,185.81 L685.95,185.81 L685.95,183.30 L688.70,183.30 L688.70,180.80 L691.45,180.80 L691.45,178.29 L694.20,178.29 L694.20,175.79 L696.95,175.79 L696.95,173.28 L699.70,173.28 L699.70,170.78 L702.45,170.78 L702.45,169.12 L705.20,169.12 L705.20,175.99 L707.95,175.99 L707.95,182.86 L710.70,182.86 L710.70,189.73 L713.45,189.73 L713.45,196.60 L716.20,196.60 L716.20,203.47 L718.95,203.47 L718.95,210.33 L721.70,210.33 L721.70,217.20 L724.45,217.20 L724.45,224.07 L727.20,224.07 L727.20,230.94 L729.95,230.94 L729.95,237.81 L732.70,237.81 L732.70,244.68 L735.45,244.68 L735.45,251.54 L738.20,251.54 L738.20,258.41 L740.95,258.41 L740.95,265.28 L743.00,265.28 L743.00,270.40" fill="none" stroke="#111" stroke-width="1.1"/><g filter="url(#sh)"><ellipse cx="378.5" cy="75.4" rx="23.6" ry="17.6" fill="none" stroke="#f01212" stroke-width="2.2"/><ellipse cx="144.4" cy="355.4" rx="31.8" ry="20.8" fill="none" stroke="#f01212" stroke-width="2.2"/></g></svg>
<div class="t" style="left:1303.3px;top:761.3px;font-size:11.30px;line-height:11.30px;color:#111;font-weight:normal;font-style:normal;">Normal stress [MPa]</div>
<div class="t" style="left:1715.3px;top:845.0px;font-size:11.20px;line-height:11.20px;color:#111;font-weight:normal;font-style:normal;">Shear stress [MPa]</div>
<div class="t" style="left:1542.5px;top:811.5px;font-size:11.60px;line-height:11.60px;color:#111;font-weight:normal;font-style:normal;">275.6</div>
<div class="t" style="left:1303.6px;top:1096.0px;font-size:11.10px;line-height:11.10px;color:#111;font-weight:normal;font-style:normal;">-275.6</div>
<div class="t" style="left:1814.6px;top:894.7px;font-size:11.60px;line-height:11.60px;color:#111;font-weight:normal;font-style:normal;">0.5</div>
<div class="t" style="left:1890.0px;top:1012.0px;font-size:11.60px;line-height:11.60px;color:#111;font-weight:normal;font-style:normal;">-27.2</div>
</body></html>
